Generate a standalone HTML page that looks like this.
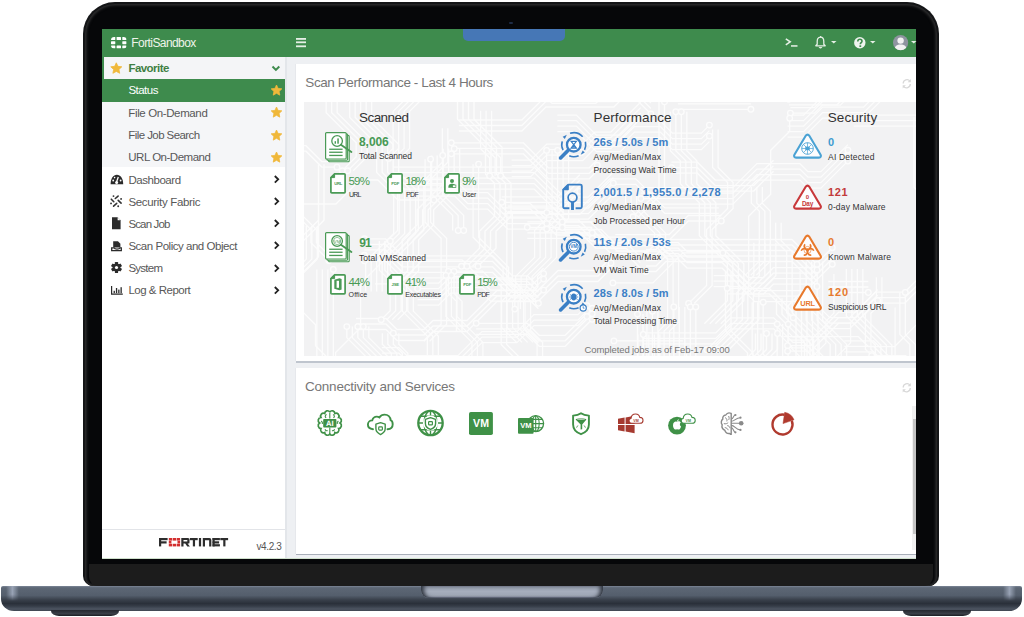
<!DOCTYPE html>
<html><head><meta charset="utf-8">
<style>
html,body{margin:0;padding:0;width:1024px;height:617px;overflow:hidden;background:#fff;font-family:"Liberation Sans",sans-serif;}
.a{position:absolute;}
.t{position:absolute;white-space:pre;font-family:"Liberation Sans",sans-serif;}
svg{position:absolute;overflow:visible;}
</style></head><body>
<!-- laptop lid -->
<div class="a" style="left:83px;top:1.5px;width:856.2px;height:584.5px;border-radius:32px 32px 10px 10px;background:#141517;"></div>
<div class="a" style="left:85px;top:3.5px;width:852.2px;height:582px;border-radius:30px 30px 8px 8px;background:#060709;box-shadow:inset 0 0 2.5px 1.6px #2e2e2f;"></div>
<div class="a" style="left:89px;top:564px;width:844px;height:21.5px;border-radius:0 0 9px 9px;background:#1c1c1c;"></div>
<!-- camera -->
<div class="a" style="left:509px;top:21.5px;width:4px;height:2px;border-radius:1px;background:#1e2c46;"></div>
<!-- base -->
<div class="a" style="left:1px;top:585.8px;width:1021px;height:25.2px;border-radius:2px 2px 13px 13px / 2px 2px 12px 12px;background:linear-gradient(#7d8798 0%,#5d6775 7%,#545e6c 38%,#39404b 55%,#2a303a 70%,#353c47 80%,#4c5461 92%,#3f4650 100%);"></div>
<div class="a" style="left:6px;top:586px;width:13px;height:15px;background:linear-gradient(90deg,rgba(150,160,178,0),rgba(156,166,184,.95) 50%,rgba(150,160,178,0));-webkit-mask-image:linear-gradient(#000 55%,transparent);"></div>
<div class="a" style="left:1003px;top:586px;width:13px;height:15px;background:linear-gradient(90deg,rgba(150,160,178,0),rgba(156,166,184,.95) 50%,rgba(150,160,178,0));-webkit-mask-image:linear-gradient(#000 55%,transparent);"></div>
<div class="a" style="left:421px;top:586px;width:182px;height:12px;border-radius:0 0 8px 8px;background:linear-gradient(#8e96a6,#a6aebd 45%,#9aa2b1);box-shadow:inset 5px 0 4px -2px #2f353f, inset -5px 0 4px -2px #2f353f, inset 0 -1px 1px #6a7282;"></div>
<div class="a" style="left:51px;top:610px;width:68px;height:6px;border-radius:0 0 8px 8px / 0 0 5px 5px;background:linear-gradient(#23272e,#3a3f47 60%,#1a1d22);"></div>
<div class="a" style="left:903px;top:610px;width:68px;height:6px;border-radius:0 0 8px 8px / 0 0 5px 5px;background:linear-gradient(#23272e,#3a3f47 60%,#1a1d22);"></div>

<!-- screen -->
<div class="a" id="screen" style="left:102px;top:29px;width:814px;height:530px;background:#eef0f3;overflow:hidden;">
  <!-- header -->
  <div class="a" style="left:0;top:0;width:814px;height:28px;background:#3e8b4d;"></div>
  <div class="a" style="left:361px;top:0;width:102px;height:12px;background:#4677b6;border-radius:0 0 5px 5px;"></div>
  <!-- sidebar -->
  <div class="a" style="left:0;top:28px;width:183px;height:502px;background:#fff;"></div>
  <div class="a" style="left:183px;top:28px;width:2px;height:502px;background:#e3e6ea;"></div>
  <div class="a" style="left:0;top:28px;width:183px;height:22px;background:#f4f5f7;"></div>
  <div class="a" style="left:0;top:28px;width:2px;height:22px;background:#3e8b4d;"></div>
  <div class="a" style="left:0;top:50px;width:183px;height:22.5px;background:#3e8b4d;"></div>
  <div class="a" style="left:0;top:72.5px;width:183px;height:65.3px;background:#f5f6f8;"></div>
  <div class="a" style="left:0;top:500px;width:183px;height:1px;background:#e2e4e8;"></div>
  <!-- panel 1 -->
  <div class="a" style="left:194px;top:35px;width:620px;height:297px;background:#fff;box-shadow:-1px 0 0 #e6e8ec;"></div>
  <div class="a" style="left:194px;top:332px;width:620px;height:2px;background:#bfc5ce;"></div>
  
  <!-- panel 2 -->
  <div class="a" style="left:194px;top:339px;width:620px;height:186px;background:#fff;box-shadow:-1px 0 0 #e6e8ec;"></div>
  <div class="a" style="left:194px;top:525px;width:620px;height:1px;background:#a9afb9;"></div>
  <div class="a" style="left:0;top:529px;width:814px;height:1px;background:#cfe0cc;"></div>
  <div class="a" style="left:810px;top:377px;width:4px;height:144px;background:#f0f0f0;"></div>
  <div class="a" style="left:810.5px;top:390px;width:3px;height:115px;background:#c4c4c4;"></div>
</div>
<svg style="left:304px;top:102px;overflow:hidden" width="612" height="254" viewBox="0 0 612 254"><rect x="0" y="0" width="612" height="254" fill="#f2f2f3"/><g fill="none" stroke="#fcfcfc" stroke-width="1.3" stroke-linejoin="round"><path d="M333.8 232.5 L333.8 274.5 L333.8 296.5 L309.8 320.5 L309.8 341.5 L292.8 358.5 L292.8 402.5 L292.8 414.5 L312.8 434.5"/><path d="M339.3 232.5 L339.3 274.5 L339.3 296.5 L315.3 320.5 L315.3 341.5 L298.3 358.5 L298.3 402.5 L298.3 414.5 L318.3 434.5"/><path d="M344.8 232.5 L344.8 274.5 L344.8 296.5 L320.8 320.5 L320.8 341.5 L303.8 358.5 L303.8 402.5 L303.8 414.5 L323.8 434.5"/><path d="M350.3 232.5 L350.3 274.5 L350.3 296.5 L326.3 320.5 L326.3 341.5 L309.3 358.5 L309.3 402.5 L309.3 414.5 L329.3 434.5"/><path d="M355.8 232.5 L355.8 274.5 L355.8 296.5 L331.8 320.5 L331.8 341.5 L314.8 358.5 L314.8 402.5 L314.8 414.5 L334.8 434.5"/><path d="M127.7 53.5 L127.7 92.5 L148.7 113.5 L148.7 128.5"/><path d="M133.2 53.5 L133.2 92.5 L154.2 113.5 L154.2 128.5"/><path d="M138.7 53.5 L138.7 92.5 L159.7 113.5 L159.7 128.5"/><path d="M22.2 -25.2 L22.2 -2.2 L22.2 10.8 L52.2 40.8 L52.2 54.8 L38.2 68.8"/><path d="M27.7 -25.2 L27.7 -2.2 L27.7 10.8 L57.7 40.8 L57.7 54.8 L43.7 68.8"/><path d="M33.2 -25.2 L33.2 -2.2 L33.2 10.8 L63.2 40.8 L63.2 54.8 L49.2 68.8"/><path d="M-13.1 102.0 L31.9 102.0 L55.9 78.0 L73.9 78.0 L93.9 98.0 L129.9 98.0"/><path d="M172.2 221.3 L207.2 221.3 L223.2 221.3 L235.2 233.3 L261.2 233.3 L288.2 206.3"/><path d="M172.2 226.8 L207.2 226.8 L223.2 226.8 L235.2 238.8 L261.2 238.8 L288.2 211.8"/><path d="M172.2 232.3 L207.2 232.3 L223.2 232.3 L235.2 244.3 L261.2 244.3 L288.2 217.3"/><path d="M60.4 136.8 L81.4 136.8 L98.4 153.8 L123.4 153.8 L143.4 153.8 L188.4 153.8 L208.4 173.8 L223.4 173.8 L234.4 184.8"/><path d="M60.4 142.3 L81.4 142.3 L98.4 159.3 L123.4 159.3 L143.4 159.3 L188.4 159.3 L208.4 179.3 L223.4 179.3 L234.4 190.3"/><path d="M60.4 147.8 L81.4 147.8 L98.4 164.8 L123.4 164.8 L143.4 164.8 L188.4 164.8 L208.4 184.8 L223.4 184.8 L234.4 195.8"/><path d="M60.4 153.3 L81.4 153.3 L98.4 170.3 L123.4 170.3 L143.4 170.3 L188.4 170.3 L208.4 190.3 L223.4 190.3 L234.4 201.3"/><path d="M60.4 158.8 L81.4 158.8 L98.4 175.8 L123.4 175.8 L143.4 175.8 L188.4 175.8 L208.4 195.8 L223.4 195.8 L234.4 206.8"/><path d="M333.5 212.1 L333.5 235.1 L333.5 258.1 L333.5 272.1 L355.5 294.1 L355.5 306.1 L336.5 325.1"/><path d="M339.0 212.1 L339.0 235.1 L339.0 258.1 L339.0 272.1 L361.0 294.1 L361.0 306.1 L342.0 325.1"/><path d="M309.9 238.9 L349.9 238.9 L378.9 238.9"/><path d="M176.6 8.8 L176.6 46.8 L185.6 55.8 L185.6 73.8"/><path d="M182.1 8.8 L182.1 46.8 L191.1 55.8 L191.1 73.8"/><path d="M187.6 8.8 L187.6 46.8 L196.6 55.8 L196.6 73.8"/><path d="M342.0 147.5 L352.0 147.5 L362.0 137.5 L379.0 137.5 L415.0 137.5 L449.0 137.5 L488.0 137.5 L513.0 162.5"/><path d="M342.0 153.0 L352.0 153.0 L362.0 143.0 L379.0 143.0 L415.0 143.0 L449.0 143.0 L488.0 143.0 L513.0 168.0"/><path d="M342.0 158.5 L352.0 158.5 L362.0 148.5 L379.0 148.5 L415.0 148.5 L449.0 148.5 L488.0 148.5 L513.0 173.5"/><path d="M342.0 164.0 L352.0 164.0 L362.0 154.0 L379.0 154.0 L415.0 154.0 L449.0 154.0 L488.0 154.0 L513.0 179.0"/><path d="M342.0 169.5 L352.0 169.5 L362.0 159.5 L379.0 159.5 L415.0 159.5 L449.0 159.5 L488.0 159.5 L513.0 184.5"/><path d="M408.6 27.5 L408.6 65.5 L423.6 80.5 L423.6 106.5 L402.6 127.5 L402.6 149.5 L402.6 183.5 L384.6 201.5"/><path d="M414.1 27.5 L414.1 65.5 L429.1 80.5 L429.1 106.5 L408.1 127.5 L408.1 149.5 L408.1 183.5 L390.1 201.5"/><path d="M154.9 18.0 L181.9 18.0 L217.9 18.0 L241.9 -6.0 L271.9 -6.0 L309.9 -6.0 L318.9 -15.0 L330.9 -15.0 L346.9 1.0"/><path d="M154.9 23.5 L181.9 23.5 L217.9 23.5 L241.9 -0.5 L271.9 -0.5 L309.9 -0.5 L318.9 -9.5 L330.9 -9.5 L346.9 6.5"/><path d="M154.9 29.0 L181.9 29.0 L217.9 29.0 L241.9 5.0 L271.9 5.0 L309.9 5.0 L318.9 -4.0 L330.9 -4.0 L346.9 12.0"/><path d="M472.5 196.3 L472.5 212.3 L500.5 240.3 L500.5 273.3 L500.5 295.3 L523.5 318.3 L523.5 328.3 L523.5 372.3"/><path d="M478.0 196.3 L478.0 212.3 L506.0 240.3 L506.0 273.3 L506.0 295.3 L529.0 318.3 L529.0 328.3 L529.0 372.3"/><path d="M610.0 15.2 L610.0 51.2 L610.0 85.2 L632.0 107.2"/><path d="M483.6 238.2 L506.6 238.2 L534.6 210.2 L551.6 210.2 L571.6 190.2 L600.6 190.2 L618.6 172.2 L629.6 172.2 L639.6 182.2"/><path d="M483.6 243.7 L506.6 243.7 L534.6 215.7 L551.6 215.7 L571.6 195.7 L600.6 195.7 L618.6 177.7 L629.6 177.7 L639.6 187.7"/><path d="M483.6 249.2 L506.6 249.2 L534.6 221.2 L551.6 221.2 L571.6 201.2 L600.6 201.2 L618.6 183.2 L629.6 183.2 L639.6 193.2"/><path d="M89.3 65.1 L108.3 65.1 L151.3 65.1 L189.3 65.1 L230.3 65.1 L260.3 95.1 L284.3 95.1 L309.3 70.1"/><path d="M89.3 70.6 L108.3 70.6 L151.3 70.6 L189.3 70.6 L230.3 70.6 L260.3 100.6 L284.3 100.6 L309.3 75.6"/><path d="M89.3 76.1 L108.3 76.1 L151.3 76.1 L189.3 76.1 L230.3 76.1 L260.3 106.1 L284.3 106.1 L309.3 81.1"/><path d="M89.3 81.6 L108.3 81.6 L151.3 81.6 L189.3 81.6 L230.3 81.6 L260.3 111.6 L284.3 111.6 L309.3 86.6"/><path d="M89.3 87.1 L108.3 87.1 L151.3 87.1 L189.3 87.1 L230.3 87.1 L260.3 117.1 L284.3 117.1 L309.3 92.1"/><path d="M311.3 132.7 L355.3 132.7 L363.3 140.7 L374.3 140.7 L383.3 149.7 L418.3 149.7 L444.3 175.7 L459.3 175.7 L469.3 165.7 L508.3 165.7 L528.3 145.7"/><path d="M311.3 138.2 L355.3 138.2 L363.3 146.2 L374.3 146.2 L383.3 155.2 L418.3 155.2 L444.3 181.2 L459.3 181.2 L469.3 171.2 L508.3 171.2 L528.3 151.2"/><path d="M311.3 143.7 L355.3 143.7 L363.3 151.7 L374.3 151.7 L383.3 160.7 L418.3 160.7 L444.3 186.7 L459.3 186.7 L469.3 176.7 L508.3 176.7 L528.3 156.7"/><path d="M311.3 149.2 L355.3 149.2 L363.3 157.2 L374.3 157.2 L383.3 166.2 L418.3 166.2 L444.3 192.2 L459.3 192.2 L469.3 182.2 L508.3 182.2 L528.3 162.2"/><path d="M144.5 169.4 L144.5 191.4 L152.5 199.4 L152.5 229.4"/><path d="M150.0 169.4 L150.0 191.4 L158.0 199.4 L158.0 229.4"/><path d="M138.3 26.2 L138.3 60.2 L114.3 84.2 L114.3 128.2 L86.3 156.2"/><path d="M143.8 26.2 L143.8 60.2 L119.8 84.2 L119.8 128.2 L91.8 156.2"/><path d="M448.2 200.2 L448.2 230.2 L448.2 252.2 L462.2 266.2 L462.2 284.2 L462.2 302.2"/><path d="M453.7 200.2 L453.7 230.2 L453.7 252.2 L467.7 266.2 L467.7 284.2 L467.7 302.2"/><path d="M459.2 200.2 L459.2 230.2 L459.2 252.2 L473.2 266.2 L473.2 284.2 L473.2 302.2"/><path d="M484.9 -2.7 L501.9 -2.7 L532.9 -2.7 L561.9 -31.7 L575.9 -31.7 L583.9 -39.7 L628.9 -39.7 L654.9 -13.7"/><path d="M484.9 2.8 L501.9 2.8 L532.9 2.8 L561.9 -26.2 L575.9 -26.2 L583.9 -34.2 L628.9 -34.2 L654.9 -8.2"/><path d="M40.2 -12.4 L56.2 -12.4 L78.2 -34.4 L110.2 -34.4 L137.2 -61.4"/><path d="M447.3 85.1 L447.3 101.1 L455.3 109.1 L455.3 124.1 L455.3 159.1 L441.3 173.1"/><path d="M452.8 85.1 L452.8 101.1 L460.8 109.1 L460.8 124.1 L460.8 159.1 L446.8 173.1"/><path d="M458.3 85.1 L458.3 101.1 L466.3 109.1 L466.3 124.1 L466.3 159.1 L452.3 173.1"/><path d="M546.6 219.9 L546.6 240.9 L533.6 253.9 L533.6 284.9 L544.6 295.9 L544.6 327.9 L544.6 340.9 L515.6 369.9 L515.6 392.9 L541.6 418.9"/><path d="M423.2 186.3 L439.2 186.3 L465.2 186.3 L489.2 210.3"/><path d="M423.2 191.8 L439.2 191.8 L465.2 191.8 L489.2 215.8"/><path d="M321.6 88.1 L321.6 102.1 L350.6 131.1 L350.6 143.1 L363.6 156.1 L363.6 176.1 L363.6 220.1 L354.6 229.1 L354.6 270.1 L330.6 294.1"/><path d="M327.1 88.1 L327.1 102.1 L356.1 131.1 L356.1 143.1 L369.1 156.1 L369.1 176.1 L369.1 220.1 L360.1 229.1 L360.1 270.1 L336.1 294.1"/><path d="M332.6 88.1 L332.6 102.1 L361.6 131.1 L361.6 143.1 L374.6 156.1 L374.6 176.1 L374.6 220.1 L365.6 229.1 L365.6 270.1 L341.6 294.1"/><path d="M-11.1 39.6 L-11.1 75.6 L-11.1 109.6 L6.9 127.6 L6.9 140.6 L24.9 158.6"/><path d="M-5.6 39.6 L-5.6 75.6 L-5.6 109.6 L12.4 127.6 L12.4 140.6 L30.4 158.6"/><path d="M572.4 175.3 L572.4 200.3 L561.4 211.3 L561.4 247.3 L575.4 261.3 L575.4 293.3 L586.4 304.3"/><path d="M577.9 175.3 L577.9 200.3 L566.9 211.3 L566.9 247.3 L580.9 261.3 L580.9 293.3 L591.9 304.3"/><path d="M471.7 120.7 L471.7 138.7 L482.7 149.7 L482.7 178.7 L482.7 210.7 L509.7 237.7 L509.7 259.7 L524.7 274.7"/><path d="M477.2 120.7 L477.2 138.7 L488.2 149.7 L488.2 178.7 L488.2 210.7 L515.2 237.7 L515.2 259.7 L530.2 274.7"/><path d="M-14.0 43.7 L2.0 43.7 L18.0 59.7 L33.0 59.7"/><path d="M-14.0 49.2 L2.0 49.2 L18.0 65.2 L33.0 65.2"/><path d="M197.2 181.5 L197.2 219.5 L197.2 242.5 L213.2 258.5"/><path d="M202.7 181.5 L202.7 219.5 L202.7 242.5 L218.7 258.5"/><path d="M451.5 231.5 L451.5 247.5 L433.5 265.5 L433.5 280.5 L459.5 306.5 L459.5 345.5 L467.5 353.5 L467.5 376.5"/><path d="M457.0 231.5 L457.0 247.5 L439.0 265.5 L439.0 280.5 L465.0 306.5 L465.0 345.5 L473.0 353.5 L473.0 376.5"/><path d="M462.5 231.5 L462.5 247.5 L444.5 265.5 L444.5 280.5 L470.5 306.5 L470.5 345.5 L478.5 353.5 L478.5 376.5"/><path d="M468.0 231.5 L468.0 247.5 L450.0 265.5 L450.0 280.5 L476.0 306.5 L476.0 345.5 L484.0 353.5 L484.0 376.5"/><path d="M473.5 231.5 L473.5 247.5 L455.5 265.5 L455.5 280.5 L481.5 306.5 L481.5 345.5 L489.5 353.5 L489.5 376.5"/><path d="M339.8 230.9 L382.8 230.9 L411.8 230.9 L426.8 215.9 L469.8 215.9 L488.8 234.9 L499.8 234.9 L519.8 254.9 L541.8 254.9"/><path d="M339.8 236.4 L382.8 236.4 L411.8 236.4 L426.8 221.4 L469.8 221.4 L488.8 240.4 L499.8 240.4 L519.8 260.4 L541.8 260.4"/><path d="M339.8 241.9 L382.8 241.9 L411.8 241.9 L426.8 226.9 L469.8 226.9 L488.8 245.9 L499.8 245.9 L519.8 265.9 L541.8 265.9"/><path d="M157.9 -23.7 L185.9 -23.7 L222.9 -23.7 L247.9 1.3 L291.9 1.3 L301.9 -8.7"/><path d="M70.9 181.8 L94.9 181.8 L118.9 157.8 L157.9 157.8 L175.9 175.8 L206.9 175.8 L229.9 198.8"/><path d="M502.2 159.4 L502.2 174.4 L502.2 218.4 L526.2 242.4 L526.2 252.4 L526.2 288.4 L526.2 307.4 L513.2 320.4"/><path d="M507.7 159.4 L507.7 174.4 L507.7 218.4 L531.7 242.4 L531.7 252.4 L531.7 288.4 L531.7 307.4 L518.7 320.4"/><path d="M513.2 159.4 L513.2 174.4 L513.2 218.4 L537.2 242.4 L537.2 252.4 L537.2 288.4 L537.2 307.4 L524.2 320.4"/><path d="M518.7 159.4 L518.7 174.4 L518.7 218.4 L542.7 242.4 L542.7 252.4 L542.7 288.4 L542.7 307.4 L529.7 320.4"/><path d="M78.3 231.2 L78.3 242.2 L87.3 251.2 L87.3 273.2 L73.3 287.2 L73.3 327.2 L58.3 342.2 L58.3 369.2 L41.3 386.2 L41.3 431.2 L25.3 447.2"/><path d="M83.8 231.2 L83.8 242.2 L92.8 251.2 L92.8 273.2 L78.8 287.2 L78.8 327.2 L63.8 342.2 L63.8 369.2 L46.8 386.2 L46.8 431.2 L30.8 447.2"/><path d="M89.3 231.2 L89.3 242.2 L98.3 251.2 L98.3 273.2 L84.3 287.2 L84.3 327.2 L69.3 342.2 L69.3 369.2 L52.3 386.2 L52.3 431.2 L36.3 447.2"/><path d="M94.8 231.2 L94.8 242.2 L103.8 251.2 L103.8 273.2 L89.8 287.2 L89.8 327.2 L74.8 342.2 L74.8 369.2 L57.8 386.2 L57.8 431.2 L41.8 447.2"/><path d="M223.3 119.8 L248.3 119.8 L288.3 119.8"/><path d="M223.3 125.3 L248.3 125.3 L288.3 125.3"/><path d="M223.3 130.8 L248.3 130.8 L288.3 130.8"/><path d="M223.3 136.3 L248.3 136.3 L288.3 136.3"/><path d="M382.6 252.0 L382.6 271.0 L369.6 284.0 L369.6 303.0"/><path d="M542.3 167.0 L542.3 178.0 L542.3 214.0 L571.3 243.0 L571.3 281.0 L546.3 306.0 L546.3 347.0 L529.3 364.0"/><path d="M547.8 167.0 L547.8 178.0 L547.8 214.0 L576.8 243.0 L576.8 281.0 L551.8 306.0 L551.8 347.0 L534.8 364.0"/><path d="M553.3 167.0 L553.3 178.0 L553.3 214.0 L582.3 243.0 L582.3 281.0 L557.3 306.0 L557.3 347.0 L540.3 364.0"/><path d="M558.8 167.0 L558.8 178.0 L558.8 214.0 L587.8 243.0 L587.8 281.0 L562.8 306.0 L562.8 347.0 L545.8 364.0"/><path d="M591.1 205.6 L591.1 239.6 L591.1 279.6 L565.1 305.6"/><path d="M549.8 13.2 L580.8 13.2 L625.8 13.2 L641.8 -2.8 L675.8 -2.8 L706.8 -2.8 L722.8 13.2"/><path d="M549.8 18.7 L580.8 18.7 L625.8 18.7 L641.8 2.7 L675.8 2.7 L706.8 2.7 L722.8 18.7"/><path d="M549.8 24.2 L580.8 24.2 L625.8 24.2 L641.8 8.2 L675.8 8.2 L706.8 8.2 L722.8 24.2"/><path d="M102.1 -19.6 L102.1 -3.6 L89.1 9.4 L89.1 46.4 L79.1 56.4"/><path d="M107.6 -19.6 L107.6 -3.6 L94.6 9.4 L94.6 46.4 L84.6 56.4"/><path d="M113.1 -19.6 L113.1 -3.6 L100.1 9.4 L100.1 46.4 L90.1 56.4"/><path d="M118.6 -19.6 L118.6 -3.6 L105.6 9.4 L105.6 46.4 L95.6 56.4"/><path d="M367.5 60.2 L393.5 60.2 L411.5 78.2 L449.5 78.2 L469.5 58.2"/><path d="M367.5 65.7 L393.5 65.7 L411.5 83.7 L449.5 83.7 L469.5 63.7"/><path d="M367.5 71.2 L393.5 71.2 L411.5 89.2 L449.5 89.2 L469.5 69.2"/><path d="M202.8 112.1 L202.8 155.1 L202.8 177.1 L210.8 185.1 L210.8 207.1"/><path d="M208.3 112.1 L208.3 155.1 L208.3 177.1 L216.3 185.1 L216.3 207.1"/><path d="M208.3 101.5 L226.3 101.5 L252.3 127.5 L297.3 127.5 L313.3 143.5 L344.3 143.5 L355.3 132.5 L365.3 132.5 L384.3 113.5 L417.3 113.5"/><path d="M208.3 107.0 L226.3 107.0 L252.3 133.0 L297.3 133.0 L313.3 149.0 L344.3 149.0 L355.3 138.0 L365.3 138.0 L384.3 119.0 L417.3 119.0"/><path d="M567.7 253.7 L601.7 253.7 L629.7 281.7 L640.7 281.7 L661.7 302.7 L680.7 302.7 L691.7 313.7 L712.7 313.7 L724.7 325.7"/><path d="M567.7 259.2 L601.7 259.2 L629.7 287.2 L640.7 287.2 L661.7 308.2 L680.7 308.2 L691.7 319.2 L712.7 319.2 L724.7 331.2"/><path d="M567.7 264.7 L601.7 264.7 L629.7 292.7 L640.7 292.7 L661.7 313.7 L680.7 313.7 L691.7 324.7 L712.7 324.7 L724.7 336.7"/><path d="M567.7 270.2 L601.7 270.2 L629.7 298.2 L640.7 298.2 L661.7 319.2 L680.7 319.2 L691.7 330.2 L712.7 330.2 L724.7 342.2"/><path d="M567.7 275.7 L601.7 275.7 L629.7 303.7 L640.7 303.7 L661.7 324.7 L680.7 324.7 L691.7 335.7 L712.7 335.7 L724.7 347.7"/><path d="M336.9 85.6 L375.9 85.6 L411.9 85.6 L428.9 85.6 L452.9 61.6 L495.9 61.6 L503.9 69.6 L516.9 69.6 L543.9 42.6"/><path d="M336.9 91.1 L375.9 91.1 L411.9 91.1 L428.9 91.1 L452.9 67.1 L495.9 67.1 L503.9 75.1 L516.9 75.1 L543.9 48.1"/><path d="M336.9 96.6 L375.9 96.6 L411.9 96.6 L428.9 96.6 L452.9 72.6 L495.9 72.6 L503.9 80.6 L516.9 80.6 L543.9 53.6"/><path d="M336.9 102.1 L375.9 102.1 L411.9 102.1 L428.9 102.1 L452.9 78.1 L495.9 78.1 L503.9 86.1 L516.9 86.1 L543.9 59.1"/><path d="M12.8 167.4 L12.8 202.4 L12.8 216.4 L12.8 249.4 L12.8 285.4 L25.8 298.4"/><path d="M18.3 167.4 L18.3 202.4 L18.3 216.4 L18.3 249.4 L18.3 285.4 L31.3 298.4"/><path d="M23.8 167.4 L23.8 202.4 L23.8 216.4 L23.8 249.4 L23.8 285.4 L36.8 298.4"/><path d="M29.3 167.4 L29.3 202.4 L29.3 216.4 L29.3 249.4 L29.3 285.4 L42.3 298.4"/><path d="M169.1 62.2 L169.1 100.2 L169.1 135.2 L199.1 165.2 L199.1 177.2 L221.1 199.2 L221.1 228.2 L233.1 240.2 L233.1 280.2"/><path d="M174.6 62.2 L174.6 100.2 L174.6 135.2 L204.6 165.2 L204.6 177.2 L226.6 199.2 L226.6 228.2 L238.6 240.2 L238.6 280.2"/><path d="M203.8 104.2 L247.8 104.2 L261.8 118.2 L274.8 118.2 L291.8 135.2 L321.8 135.2"/><path d="M203.8 109.7 L247.8 109.7 L261.8 123.7 L274.8 123.7 L291.8 140.7 L321.8 140.7"/><path d="M203.8 115.2 L247.8 115.2 L261.8 129.2 L274.8 129.2 L291.8 146.2 L321.8 146.2"/><path d="M121.1 57.2 L121.1 78.2 L121.1 120.2 L137.1 136.2 L137.1 179.2 L137.1 222.2 L120.1 239.2"/><path d="M126.6 57.2 L126.6 78.2 L126.6 120.2 L142.6 136.2 L142.6 179.2 L142.6 222.2 L125.6 239.2"/><path d="M258.3 120.0 L286.3 120.0 L307.3 141.0 L322.3 141.0 L336.3 155.0"/><path d="M258.3 125.5 L286.3 125.5 L307.3 146.5 L322.3 146.5 L336.3 160.5"/><path d="M258.3 131.0 L286.3 131.0 L307.3 152.0 L322.3 152.0 L336.3 166.0"/><path d="M349.7 -29.2 L370.7 -29.2 L398.7 -57.2 L428.7 -57.2 L437.7 -66.2"/><path d="M349.7 -23.7 L370.7 -23.7 L398.7 -51.7 L428.7 -51.7 L437.7 -60.7"/><path d="M349.7 -18.2 L370.7 -18.2 L398.7 -46.2 L428.7 -46.2 L437.7 -55.2"/><path d="M349.7 -12.7 L370.7 -12.7 L398.7 -40.7 L428.7 -40.7 L437.7 -49.7"/><path d="M349.7 -7.2 L370.7 -7.2 L398.7 -35.2 L428.7 -35.2 L437.7 -44.2"/><path d="M141.9 173.4 L141.9 214.4 L167.9 240.4 L167.9 266.4 L194.9 293.4 L194.9 306.4 L207.9 319.4 L207.9 330.4 L186.9 351.4"/><path d="M147.4 173.4 L147.4 214.4 L173.4 240.4 L173.4 266.4 L200.4 293.4 L200.4 306.4 L213.4 319.4 L213.4 330.4 L192.4 351.4"/><path d="M152.9 173.4 L152.9 214.4 L178.9 240.4 L178.9 266.4 L205.9 293.4 L205.9 306.4 L218.9 319.4 L218.9 330.4 L197.9 351.4"/><path d="M373.9 -14.7 L403.9 -14.7 L446.9 -14.7"/><path d="M373.9 -9.2 L403.9 -9.2 L446.9 -9.2"/><path d="M373.9 -3.7 L403.9 -3.7 L446.9 -3.7"/><path d="M373.9 1.8 L403.9 1.8 L446.9 1.8"/><path d="M373.9 7.3 L403.9 7.3 L446.9 7.3"/><path d="M421.5 169.9 L421.5 210.9 L421.5 228.9 L443.5 250.9 L443.5 262.9 L464.5 283.9"/><path d="M427.0 169.9 L427.0 210.9 L427.0 228.9 L449.0 250.9 L449.0 262.9 L470.0 283.9"/><path d="M409.7 173.6 L435.7 173.6 L450.7 188.6 L465.7 188.6 L498.7 188.6 L525.7 215.6 L545.7 215.6 L573.7 187.6"/><path d="M409.7 179.1 L435.7 179.1 L450.7 194.1 L465.7 194.1 L498.7 194.1 L525.7 221.1 L545.7 221.1 L573.7 193.1"/><path d="M409.7 184.6 L435.7 184.6 L450.7 199.6 L465.7 199.6 L498.7 199.6 L525.7 226.6 L545.7 226.6 L573.7 198.6"/><path d="M114.8 77.6 L150.8 77.6 L163.8 90.6 L183.8 90.6 L203.8 110.6 L242.8 110.6"/><path d="M114.8 83.1 L150.8 83.1 L163.8 96.1 L183.8 96.1 L203.8 116.1 L242.8 116.1"/><path d="M114.8 88.6 L150.8 88.6 L163.8 101.6 L183.8 101.6 L203.8 121.6 L242.8 121.6"/><path d="M114.8 94.1 L150.8 94.1 L163.8 107.1 L183.8 107.1 L203.8 127.1 L242.8 127.1"/><path d="M153.5 -24.7 L153.5 17.3 L181.5 45.3 L181.5 72.3 L190.5 81.3 L190.5 114.3 L175.5 129.3 L175.5 146.3 L157.5 164.3"/><path d="M159.0 -24.7 L159.0 17.3 L187.0 45.3 L187.0 72.3 L196.0 81.3 L196.0 114.3 L181.0 129.3 L181.0 146.3 L163.0 164.3"/><path d="M164.5 -24.7 L164.5 17.3 L192.5 45.3 L192.5 72.3 L201.5 81.3 L201.5 114.3 L186.5 129.3 L186.5 146.3 L168.5 164.3"/><path d="M170.0 -24.7 L170.0 17.3 L198.0 45.3 L198.0 72.3 L207.0 81.3 L207.0 114.3 L192.0 129.3 L192.0 146.3 L174.0 164.3"/><path d="M75.3 139.1 L75.3 168.1 L98.3 191.1 L98.3 209.1 L123.3 234.1 L123.3 272.1 L111.3 284.1"/><path d="M80.8 139.1 L80.8 168.1 L103.8 191.1 L103.8 209.1 L128.8 234.1 L128.8 272.1 L116.8 284.1"/><path d="M86.3 139.1 L86.3 168.1 L109.3 191.1 L109.3 209.1 L134.3 234.1 L134.3 272.1 L122.3 284.1"/><path d="M366.3 9.8 L366.3 19.8 L366.3 48.8 L376.3 58.8 L376.3 81.8 L395.3 100.8 L395.3 133.8 L423.3 161.8 L423.3 198.8 L400.3 221.8"/><path d="M371.8 9.8 L371.8 19.8 L371.8 48.8 L381.8 58.8 L381.8 81.8 L400.8 100.8 L400.8 133.8 L428.8 161.8 L428.8 198.8 L405.8 221.8"/><path d="M377.3 9.8 L377.3 19.8 L377.3 48.8 L387.3 58.8 L387.3 81.8 L406.3 100.8 L406.3 133.8 L434.3 161.8 L434.3 198.8 L411.3 221.8"/><path d="M382.8 9.8 L382.8 19.8 L382.8 48.8 L392.8 58.8 L392.8 81.8 L411.8 100.8 L411.8 133.8 L439.8 161.8 L439.8 198.8 L416.8 221.8"/><path d="M308.9 180.9 L348.9 180.9 L378.9 150.9 L407.9 150.9 L418.9 150.9"/><path d="M14.5 110.7 L14.5 140.7 L14.5 154.7 L-4.5 173.7 L-4.5 206.7 L11.5 222.7 L11.5 243.7 L31.5 263.7 L31.5 296.7 L61.5 326.7"/><path d="M242.6 48.4 L242.6 82.4 L242.6 116.4 L230.6 128.4 L230.6 155.4 L211.6 174.4 L211.6 185.4 L197.6 199.4 L197.6 225.4 L212.6 240.4"/><path d="M248.1 48.4 L248.1 82.4 L248.1 116.4 L236.1 128.4 L236.1 155.4 L217.1 174.4 L217.1 185.4 L203.1 199.4 L203.1 225.4 L218.1 240.4"/><path d="M253.6 48.4 L253.6 82.4 L253.6 116.4 L241.6 128.4 L241.6 155.4 L222.6 174.4 L222.6 185.4 L208.6 199.4 L208.6 225.4 L223.6 240.4"/><path d="M259.1 48.4 L259.1 82.4 L259.1 116.4 L247.1 128.4 L247.1 155.4 L228.1 174.4 L228.1 185.4 L214.1 199.4 L214.1 225.4 L229.1 240.4"/><path d="M264.6 48.4 L264.6 82.4 L264.6 116.4 L252.6 128.4 L252.6 155.4 L233.6 174.4 L233.6 185.4 L219.6 199.4 L219.6 225.4 L234.6 240.4"/><path d="M45.7 -24.5 L45.7 -4.5 L45.7 15.5 L72.7 42.5 L72.7 70.5 L89.7 87.5 L89.7 131.5 L61.7 159.5 L61.7 189.5"/><path d="M51.2 -24.5 L51.2 -4.5 L51.2 15.5 L78.2 42.5 L78.2 70.5 L95.2 87.5 L95.2 131.5 L67.2 159.5 L67.2 189.5"/><path d="M56.7 -24.5 L56.7 -4.5 L56.7 15.5 L83.7 42.5 L83.7 70.5 L100.7 87.5 L100.7 131.5 L72.7 159.5 L72.7 189.5"/><path d="M62.2 -24.5 L62.2 -4.5 L62.2 15.5 L89.2 42.5 L89.2 70.5 L106.2 87.5 L106.2 131.5 L78.2 159.5 L78.2 189.5"/><path d="M67.7 -24.5 L67.7 -4.5 L67.7 15.5 L94.7 42.5 L94.7 70.5 L111.7 87.5 L111.7 131.5 L83.7 159.5 L83.7 189.5"/><path d="M240.8 106.9 L275.8 106.9 L305.8 76.9 L331.8 76.9 L360.8 105.9 L391.8 105.9 L414.8 105.9"/><path d="M240.8 112.4 L275.8 112.4 L305.8 82.4 L331.8 82.4 L360.8 111.4 L391.8 111.4 L414.8 111.4"/><path d="M486.4 5.6 L510.4 5.6 L518.4 -2.4 L536.4 -2.4 L552.4 -18.4 L587.4 -18.4 L616.4 -47.4 L629.4 -47.4 L640.4 -58.4"/><path d="M486.4 11.1 L510.4 11.1 L518.4 3.1 L536.4 3.1 L552.4 -12.9 L587.4 -12.9 L616.4 -41.9 L629.4 -41.9 L640.4 -52.9"/><path d="M-3.2 124.1 L-3.2 157.1 L-25.2 179.1 L-25.2 207.1 L-52.2 234.1 L-52.2 253.1"/><path d="M2.3 124.1 L2.3 157.1 L-19.7 179.1 L-19.7 207.1 L-46.7 234.1 L-46.7 253.1"/><path d="M7.8 124.1 L7.8 157.1 L-14.2 179.1 L-14.2 207.1 L-41.2 234.1 L-41.2 253.1"/><path d="M13.3 124.1 L13.3 157.1 L-8.7 179.1 L-8.7 207.1 L-35.7 234.1 L-35.7 253.1"/><path d="M253.4 13.1 L272.4 13.1 L292.4 33.1 L316.4 33.1 L330.4 19.1 L356.4 19.1 L368.4 31.1 L397.4 31.1 L405.4 23.1"/><path d="M253.4 18.6 L272.4 18.6 L292.4 38.6 L316.4 38.6 L330.4 24.6 L356.4 24.6 L368.4 36.6 L397.4 36.6 L405.4 28.6"/><path d="M253.4 24.1 L272.4 24.1 L292.4 44.1 L316.4 44.1 L330.4 30.1 L356.4 30.1 L368.4 42.1 L397.4 42.1 L405.4 34.1"/><path d="M253.4 29.6 L272.4 29.6 L292.4 49.6 L316.4 49.6 L330.4 35.6 L356.4 35.6 L368.4 47.6 L397.4 47.6 L405.4 39.6"/><path d="M369.8 204.9 L369.8 226.9 L369.8 251.9 L369.8 289.9 L360.8 298.9 L360.8 309.9"/><path d="M375.3 204.9 L375.3 226.9 L375.3 251.9 L375.3 289.9 L366.3 298.9 L366.3 309.9"/><path d="M380.8 204.9 L380.8 226.9 L380.8 251.9 L380.8 289.9 L371.8 298.9 L371.8 309.9"/><path d="M386.3 204.9 L386.3 226.9 L386.3 251.9 L386.3 289.9 L377.3 298.9 L377.3 309.9"/><path d="M391.8 204.9 L391.8 226.9 L391.8 251.9 L391.8 289.9 L382.8 298.9 L382.8 309.9"/><path d="M492.0 195.0 L492.0 224.0 L492.0 240.0 L492.0 280.0 L462.0 310.0 L462.0 321.0 L450.0 333.0 L450.0 367.0"/><path d="M497.5 195.0 L497.5 224.0 L497.5 240.0 L497.5 280.0 L467.5 310.0 L467.5 321.0 L455.5 333.0 L455.5 367.0"/><path d="M503.0 195.0 L503.0 224.0 L503.0 240.0 L503.0 280.0 L473.0 310.0 L473.0 321.0 L461.0 333.0 L461.0 367.0"/><path d="M508.5 195.0 L508.5 224.0 L508.5 240.0 L508.5 280.0 L478.5 310.0 L478.5 321.0 L466.5 333.0 L466.5 367.0"/><path d="M514.0 195.0 L514.0 224.0 L514.0 240.0 L514.0 280.0 L484.0 310.0 L484.0 321.0 L472.0 333.0 L472.0 367.0"/><path d="M113.6 181.1 L134.6 181.1 L146.6 169.1 L178.6 169.1 L186.6 177.1 L228.6 177.1 L239.6 166.1"/><path d="M113.6 186.6 L134.6 186.6 L146.6 174.6 L178.6 174.6 L186.6 182.6 L228.6 182.6 L239.6 171.6"/><path d="M113.6 192.1 L134.6 192.1 L146.6 180.1 L178.6 180.1 L186.6 188.1 L228.6 188.1 L239.6 177.1"/><path d="M113.6 197.6 L134.6 197.6 L146.6 185.6 L178.6 185.6 L186.6 193.6 L228.6 193.6 L239.6 182.6"/><path d="M113.6 203.1 L134.6 203.1 L146.6 191.1 L178.6 191.1 L186.6 199.1 L228.6 199.1 L239.6 188.1"/><path d="M473.2 222.1 L473.2 256.1 L473.2 286.1"/><path d="M478.7 222.1 L478.7 256.1 L478.7 286.1"/><path d="M484.2 222.1 L484.2 256.1 L484.2 286.1"/><path d="M197.8 94.8 L214.8 94.8 L253.8 94.8 L275.8 72.8"/><path d="M197.8 100.3 L214.8 100.3 L253.8 100.3 L275.8 78.3"/><path d="M197.8 105.8 L214.8 105.8 L253.8 105.8 L275.8 83.8"/><path d="M197.8 111.3 L214.8 111.3 L253.8 111.3 L275.8 89.3"/><path d="M14.5 62.2 L14.5 88.2 L14.5 118.2 L-8.5 141.2 L-8.5 176.2 L-20.5 188.2 L-20.5 229.2 L-33.5 242.2"/><path d="M20.0 62.2 L20.0 88.2 L20.0 118.2 L-3.0 141.2 L-3.0 176.2 L-15.0 188.2 L-15.0 229.2 L-28.0 242.2"/><path d="M529.9 172.1 L529.9 211.1 L521.9 219.1 L521.9 241.1 L493.9 269.1 L493.9 285.1 L516.9 308.1 L516.9 322.1"/><path d="M483.6 13.1 L499.6 13.1 L518.6 -5.9 L542.6 -5.9 L559.6 -5.9 L586.6 -32.9"/><path d="M483.6 18.6 L499.6 18.6 L518.6 -0.4 L542.6 -0.4 L559.6 -0.4 L586.6 -27.4"/><path d="M483.6 24.1 L499.6 24.1 L518.6 5.1 L542.6 5.1 L559.6 5.1 L586.6 -21.9"/><path d="M483.6 29.6 L499.6 29.6 L518.6 10.6 L542.6 10.6 L559.6 10.6 L586.6 -16.4"/><path d="M483.6 35.1 L499.6 35.1 L518.6 16.1 L542.6 16.1 L559.6 16.1 L586.6 -10.9"/><path d="M496.1 168.8 L496.1 191.8 L484.1 203.8 L484.1 242.8 L500.1 258.8 L500.1 290.8 L481.1 309.8"/><path d="M207.7 58.1 L226.7 58.1 L242.7 42.1 L278.7 42.1 L290.7 30.1 L306.7 30.1 L336.7 0.1"/><path d="M207.7 63.6 L226.7 63.6 L242.7 47.6 L278.7 47.6 L290.7 35.6 L306.7 35.6 L336.7 5.6"/><path d="M207.7 69.1 L226.7 69.1 L242.7 53.1 L278.7 53.1 L290.7 41.1 L306.7 41.1 L336.7 11.1"/><path d="M207.7 74.6 L226.7 74.6 L242.7 58.6 L278.7 58.6 L290.7 46.6 L306.7 46.6 L336.7 16.6"/><path d="M449.8 140.8 L449.8 173.8 L432.8 190.8 L432.8 217.8 L402.8 247.8"/><path d="M455.3 140.8 L455.3 173.8 L438.3 190.8 L438.3 217.8 L408.3 247.8"/><path d="M460.8 140.8 L460.8 173.8 L443.8 190.8 L443.8 217.8 L413.8 247.8"/><path d="M466.3 140.8 L466.3 173.8 L449.3 190.8 L449.3 217.8 L419.3 247.8"/><path d="M471.8 140.8 L471.8 173.8 L454.8 190.8 L454.8 217.8 L424.8 247.8"/><path d="M42.8 224.6 L42.8 235.6 L68.8 261.6 L68.8 293.6 L68.8 304.6 L80.8 316.6 L80.8 349.6 L104.8 373.6"/><path d="M48.3 224.6 L48.3 235.6 L74.3 261.6 L74.3 293.6 L74.3 304.6 L86.3 316.6 L86.3 349.6 L110.3 373.6"/><path d="M53.8 224.6 L53.8 235.6 L79.8 261.6 L79.8 293.6 L79.8 304.6 L91.8 316.6 L91.8 349.6 L115.8 373.6"/><path d="M59.3 224.6 L59.3 235.6 L85.3 261.6 L85.3 293.6 L85.3 304.6 L97.3 316.6 L97.3 349.6 L121.3 373.6"/><path d="M64.8 224.6 L64.8 235.6 L90.8 261.6 L90.8 293.6 L90.8 304.6 L102.8 316.6 L102.8 349.6 L126.8 373.6"/><path d="M479.4 234.7 L512.4 234.7 L554.4 234.7 L564.4 244.7 L590.4 244.7 L613.4 221.7 L630.4 221.7 L642.4 209.7 L675.4 209.7"/><path d="M595.8 190.4 L595.8 232.4 L605.8 242.4 L605.8 260.4 L629.8 284.4 L629.8 312.4 L644.8 327.4 L644.8 363.4 L630.8 377.4"/><path d="M601.3 190.4 L601.3 232.4 L611.3 242.4 L611.3 260.4 L635.3 284.4 L635.3 312.4 L650.3 327.4 L650.3 363.4 L636.3 377.4"/><path d="M77.9 245.6 L94.9 245.6 L102.9 253.6 L119.9 253.6 L153.9 253.6 L177.9 229.6 L212.9 229.6 L229.9 212.6 L273.9 212.6 L282.9 203.6"/><path d="M77.9 251.1 L94.9 251.1 L102.9 259.1 L119.9 259.1 L153.9 259.1 L177.9 235.1 L212.9 235.1 L229.9 218.1 L273.9 218.1 L282.9 209.1"/><path d="M77.9 256.6 L94.9 256.6 L102.9 264.6 L119.9 264.6 L153.9 264.6 L177.9 240.6 L212.9 240.6 L229.9 223.6 L273.9 223.6 L282.9 214.6"/><path d="M540.4 238.8 L569.4 238.8 L596.4 265.8 L629.4 265.8 L652.4 242.8 L689.4 242.8 L700.4 253.8 L743.4 253.8 L767.4 229.8 L797.4 229.8 L812.4 244.8"/><path d="M540.4 244.3 L569.4 244.3 L596.4 271.3 L629.4 271.3 L652.4 248.3 L689.4 248.3 L700.4 259.3 L743.4 259.3 L767.4 235.3 L797.4 235.3 L812.4 250.3"/><path d="M540.4 249.8 L569.4 249.8 L596.4 276.8 L629.4 276.8 L652.4 253.8 L689.4 253.8 L700.4 264.8 L743.4 264.8 L767.4 240.8 L797.4 240.8 L812.4 255.8"/><path d="M355.0 -0.2 L355.0 32.8 L355.0 65.8 L355.0 88.8 L329.0 114.8"/><path d="M360.5 -0.2 L360.5 32.8 L360.5 65.8 L360.5 88.8 L334.5 114.8"/><path d="M139.2 46.7 L139.2 81.7 L113.2 107.7 L113.2 122.7 L98.2 137.7 L98.2 168.7 L86.2 180.7 L86.2 208.7 L77.2 217.7"/><path d="M144.7 46.7 L144.7 81.7 L118.7 107.7 L118.7 122.7 L103.7 137.7 L103.7 168.7 L91.7 180.7 L91.7 208.7 L82.7 217.7"/><path d="M150.2 46.7 L150.2 81.7 L124.2 107.7 L124.2 122.7 L109.2 137.7 L109.2 168.7 L97.2 180.7 L97.2 208.7 L88.2 217.7"/><path d="M155.7 46.7 L155.7 81.7 L129.7 107.7 L129.7 122.7 L114.7 137.7 L114.7 168.7 L102.7 180.7 L102.7 208.7 L93.7 217.7"/><path d="M-16.5 179.3 L-16.5 193.3 L-26.5 203.3 L-26.5 221.3 L-48.5 243.3 L-48.5 260.3 L-58.5 270.3 L-58.5 302.3 L-83.5 327.3"/><path d="M52.0 216.5 L82.0 216.5 L93.0 227.5 L120.0 227.5 L129.0 218.5 L163.0 218.5 L193.0 188.5 L234.0 188.5 L254.0 168.5 L294.0 168.5 L307.0 155.5"/><path d="M52.0 222.0 L82.0 222.0 L93.0 233.0 L120.0 233.0 L129.0 224.0 L163.0 224.0 L193.0 194.0 L234.0 194.0 L254.0 174.0 L294.0 174.0 L307.0 161.0"/><path d="M52.0 227.5 L82.0 227.5 L93.0 238.5 L120.0 238.5 L129.0 229.5 L163.0 229.5 L193.0 199.5 L234.0 199.5 L254.0 179.5 L294.0 179.5 L307.0 166.5"/><path d="M342.9 209.2 L342.9 249.2 L342.9 284.2 L312.9 314.2 L312.9 340.2 L291.9 361.2"/><path d="M348.4 209.2 L348.4 249.2 L348.4 284.2 L318.4 314.2 L318.4 340.2 L297.4 361.2"/><path d="M353.9 209.2 L353.9 249.2 L353.9 284.2 L323.9 314.2 L323.9 340.2 L302.9 361.2"/><path d="M93.6 87.5 L93.6 128.5 L80.6 141.5 L80.6 157.5 L56.6 181.5 L56.6 193.5 L56.6 225.5 L31.6 250.5 L31.6 291.5 L12.6 310.5"/><path d="M524.3 179.5 L544.3 179.5 L564.3 179.5"/><path d="M524.3 185.0 L544.3 185.0 L564.3 185.0"/><path d="M524.3 190.5 L544.3 190.5 L564.3 190.5"/><path d="M147.3 40.8 L191.3 40.8 L219.3 40.8 L244.3 65.8 L285.3 65.8 L293.3 57.8"/><path d="M147.3 46.3 L191.3 46.3 L219.3 46.3 L244.3 71.3 L285.3 71.3 L293.3 63.3"/><path d="M147.3 51.8 L191.3 51.8 L219.3 51.8 L244.3 76.8 L285.3 76.8 L293.3 68.8"/><path d="M485.7 16.2 L485.7 29.2 L466.7 48.2 L466.7 92.2 L444.7 114.2 L444.7 146.2 L444.7 188.2 L425.7 207.2"/></g><g fill="#f2f2f3" stroke="#fcfcfc" stroke-width="1.3"><circle cx="339.3" cy="232.5" r="2.8"/><circle cx="323.8" cy="434.5" r="2.8"/><circle cx="334.8" cy="434.5" r="2.8"/><circle cx="154.2" cy="128.5" r="2.8"/><circle cx="159.7" cy="128.5" r="2.8"/><circle cx="138.7" cy="53.5" r="2.8"/><circle cx="38.2" cy="68.8" r="2.8"/><circle cx="43.7" cy="68.8" r="2.8"/><circle cx="33.2" cy="-25.2" r="2.8"/><circle cx="129.9" cy="98.0" r="2.8"/><circle cx="288.2" cy="206.3" r="2.8"/><circle cx="172.2" cy="221.3" r="2.8"/><circle cx="288.2" cy="211.8" r="2.8"/><circle cx="288.2" cy="217.3" r="2.8"/><circle cx="60.4" cy="136.8" r="2.8"/><circle cx="234.4" cy="201.3" r="2.8"/><circle cx="60.4" cy="153.3" r="2.8"/><circle cx="60.4" cy="158.8" r="2.8"/><circle cx="336.5" cy="325.1" r="2.8"/><circle cx="333.5" cy="212.1" r="2.8"/><circle cx="342.0" cy="325.1" r="2.8"/><circle cx="309.9" cy="238.9" r="2.8"/><circle cx="185.6" cy="73.8" r="2.8"/><circle cx="196.6" cy="73.8" r="2.8"/><circle cx="513.0" cy="162.5" r="2.8"/><circle cx="513.0" cy="168.0" r="2.8"/><circle cx="342.0" cy="153.0" r="2.8"/><circle cx="513.0" cy="184.5" r="2.8"/><circle cx="342.0" cy="169.5" r="2.8"/><circle cx="384.6" cy="201.5" r="2.8"/><circle cx="346.9" cy="12.0" r="2.8"/><circle cx="523.5" cy="372.3" r="2.8"/><circle cx="632.0" cy="107.2" r="2.8"/><circle cx="639.6" cy="187.7" r="2.8"/><circle cx="483.6" cy="243.7" r="2.8"/><circle cx="483.6" cy="249.2" r="2.8"/><circle cx="309.3" cy="81.1" r="2.8"/><circle cx="309.3" cy="92.1" r="2.8"/><circle cx="528.3" cy="145.7" r="2.8"/><circle cx="528.3" cy="162.2" r="2.8"/><circle cx="144.5" cy="169.4" r="2.8"/><circle cx="150.0" cy="169.4" r="2.8"/><circle cx="462.2" cy="302.2" r="2.8"/><circle cx="459.2" cy="200.2" r="2.8"/><circle cx="654.9" cy="-13.7" r="2.8"/><circle cx="484.9" cy="-2.7" r="2.8"/><circle cx="40.2" cy="-12.4" r="2.8"/><circle cx="541.6" cy="418.9" r="2.8"/><circle cx="423.2" cy="186.3" r="2.8"/><circle cx="489.2" cy="215.8" r="2.8"/><circle cx="330.6" cy="294.1" r="2.8"/><circle cx="341.6" cy="294.1" r="2.8"/><circle cx="24.9" cy="158.6" r="2.8"/><circle cx="-5.6" cy="39.6" r="2.8"/><circle cx="591.9" cy="304.3" r="2.8"/><circle cx="530.2" cy="274.7" r="2.8"/><circle cx="33.0" cy="65.2" r="2.8"/><circle cx="213.2" cy="258.5" r="2.8"/><circle cx="467.5" cy="376.5" r="2.8"/><circle cx="478.5" cy="376.5" r="2.8"/><circle cx="462.5" cy="231.5" r="2.8"/><circle cx="484.0" cy="376.5" r="2.8"/><circle cx="489.5" cy="376.5" r="2.8"/><circle cx="473.5" cy="231.5" r="2.8"/><circle cx="541.8" cy="265.9" r="2.8"/><circle cx="157.9" cy="-23.7" r="2.8"/><circle cx="518.7" cy="320.4" r="2.8"/><circle cx="524.2" cy="320.4" r="2.8"/><circle cx="529.7" cy="320.4" r="2.8"/><circle cx="36.3" cy="447.2" r="2.8"/><circle cx="89.3" cy="231.2" r="2.8"/><circle cx="41.8" cy="447.2" r="2.8"/><circle cx="223.3" cy="125.3" r="2.8"/><circle cx="288.3" cy="130.8" r="2.8"/><circle cx="288.3" cy="136.3" r="2.8"/><circle cx="369.6" cy="303.0" r="2.8"/><circle cx="529.3" cy="364.0" r="2.8"/><circle cx="534.8" cy="364.0" r="2.8"/><circle cx="540.3" cy="364.0" r="2.8"/><circle cx="545.8" cy="364.0" r="2.8"/><circle cx="722.8" cy="13.2" r="2.8"/><circle cx="722.8" cy="18.7" r="2.8"/><circle cx="722.8" cy="24.2" r="2.8"/><circle cx="102.1" cy="-19.6" r="2.8"/><circle cx="84.6" cy="56.4" r="2.8"/><circle cx="107.6" cy="-19.6" r="2.8"/><circle cx="367.5" cy="65.7" r="2.8"/><circle cx="210.8" cy="207.1" r="2.8"/><circle cx="417.3" cy="119.0" r="2.8"/><circle cx="567.7" cy="253.7" r="2.8"/><circle cx="724.7" cy="342.2" r="2.8"/><circle cx="567.7" cy="270.2" r="2.8"/><circle cx="724.7" cy="347.7" r="2.8"/><circle cx="543.9" cy="48.1" r="2.8"/><circle cx="543.9" cy="53.6" r="2.8"/><circle cx="336.9" cy="96.6" r="2.8"/><circle cx="543.9" cy="59.1" r="2.8"/><circle cx="31.3" cy="298.4" r="2.8"/><circle cx="36.8" cy="298.4" r="2.8"/><circle cx="29.3" cy="167.4" r="2.8"/><circle cx="233.1" cy="280.2" r="2.8"/><circle cx="174.6" cy="62.2" r="2.8"/><circle cx="321.8" cy="140.7" r="2.8"/><circle cx="126.6" cy="57.2" r="2.8"/><circle cx="258.3" cy="120.0" r="2.8"/><circle cx="258.3" cy="125.5" r="2.8"/><circle cx="349.7" cy="-12.7" r="2.8"/><circle cx="437.7" cy="-44.2" r="2.8"/><circle cx="141.9" cy="173.4" r="2.8"/><circle cx="192.4" cy="351.4" r="2.8"/><circle cx="147.4" cy="173.4" r="2.8"/><circle cx="446.9" cy="-14.7" r="2.8"/><circle cx="446.9" cy="-3.7" r="2.8"/><circle cx="446.9" cy="7.3" r="2.8"/><circle cx="464.5" cy="283.9" r="2.8"/><circle cx="470.0" cy="283.9" r="2.8"/><circle cx="573.7" cy="198.6" r="2.8"/><circle cx="242.8" cy="110.6" r="2.8"/><circle cx="242.8" cy="121.6" r="2.8"/><circle cx="242.8" cy="127.1" r="2.8"/><circle cx="157.5" cy="164.3" r="2.8"/><circle cx="163.0" cy="164.3" r="2.8"/><circle cx="164.5" cy="-24.7" r="2.8"/><circle cx="174.0" cy="164.3" r="2.8"/><circle cx="170.0" cy="-24.7" r="2.8"/><circle cx="116.8" cy="284.1" r="2.8"/><circle cx="122.3" cy="284.1" r="2.8"/><circle cx="86.3" cy="139.1" r="2.8"/><circle cx="371.8" cy="9.8" r="2.8"/><circle cx="377.3" cy="9.8" r="2.8"/><circle cx="418.9" cy="150.9" r="2.8"/><circle cx="308.9" cy="180.9" r="2.8"/><circle cx="242.6" cy="48.4" r="2.8"/><circle cx="253.6" cy="48.4" r="2.8"/><circle cx="67.7" cy="-24.5" r="2.8"/><circle cx="640.4" cy="-58.4" r="2.8"/><circle cx="486.4" cy="11.1" r="2.8"/><circle cx="-3.2" cy="124.1" r="2.8"/><circle cx="-46.7" cy="253.1" r="2.8"/><circle cx="-41.2" cy="253.1" r="2.8"/><circle cx="405.4" cy="23.1" r="2.8"/><circle cx="405.4" cy="34.1" r="2.8"/><circle cx="360.8" cy="309.9" r="2.8"/><circle cx="369.8" cy="204.9" r="2.8"/><circle cx="366.3" cy="309.9" r="2.8"/><circle cx="371.8" cy="309.9" r="2.8"/><circle cx="377.3" cy="309.9" r="2.8"/><circle cx="386.3" cy="204.9" r="2.8"/><circle cx="391.8" cy="204.9" r="2.8"/><circle cx="455.5" cy="367.0" r="2.8"/><circle cx="461.0" cy="367.0" r="2.8"/><circle cx="472.0" cy="367.0" r="2.8"/><circle cx="239.6" cy="171.6" r="2.8"/><circle cx="113.6" cy="186.6" r="2.8"/><circle cx="239.6" cy="177.1" r="2.8"/><circle cx="239.6" cy="188.1" r="2.8"/><circle cx="473.2" cy="222.1" r="2.8"/><circle cx="484.2" cy="222.1" r="2.8"/><circle cx="197.8" cy="100.3" r="2.8"/><circle cx="275.8" cy="89.3" r="2.8"/><circle cx="586.6" cy="-32.9" r="2.8"/><circle cx="586.6" cy="-27.4" r="2.8"/><circle cx="336.7" cy="16.6" r="2.8"/><circle cx="402.8" cy="247.8" r="2.8"/><circle cx="408.3" cy="247.8" r="2.8"/><circle cx="413.8" cy="247.8" r="2.8"/><circle cx="419.3" cy="247.8" r="2.8"/><circle cx="104.8" cy="373.6" r="2.8"/><circle cx="42.8" cy="224.6" r="2.8"/><circle cx="110.3" cy="373.6" r="2.8"/><circle cx="115.8" cy="373.6" r="2.8"/><circle cx="53.8" cy="224.6" r="2.8"/><circle cx="59.3" cy="224.6" r="2.8"/><circle cx="126.8" cy="373.6" r="2.8"/><circle cx="675.4" cy="209.7" r="2.8"/><circle cx="601.3" cy="190.4" r="2.8"/><circle cx="282.9" cy="203.6" r="2.8"/><circle cx="282.9" cy="209.1" r="2.8"/><circle cx="282.9" cy="214.6" r="2.8"/><circle cx="812.4" cy="244.8" r="2.8"/><circle cx="329.0" cy="114.8" r="2.8"/><circle cx="360.5" cy="-0.2" r="2.8"/><circle cx="77.2" cy="217.7" r="2.8"/><circle cx="150.2" cy="46.7" r="2.8"/><circle cx="-83.5" cy="327.3" r="2.8"/><circle cx="307.0" cy="155.5" r="2.8"/><circle cx="307.0" cy="161.0" r="2.8"/><circle cx="297.4" cy="361.2" r="2.8"/><circle cx="348.4" cy="209.2" r="2.8"/><circle cx="302.9" cy="361.2" r="2.8"/><circle cx="12.6" cy="310.5" r="2.8"/><circle cx="93.6" cy="87.5" r="2.8"/><circle cx="564.3" cy="190.5" r="2.8"/><circle cx="147.3" cy="40.8" r="2.8"/><circle cx="293.3" cy="63.3" r="2.8"/><circle cx="147.3" cy="51.8" r="2.8"/><circle cx="485.7" cy="16.2" r="2.8"/></g></svg>
<svg style="left:110.7px;top:36.5px" width="16" height="12" viewBox="0 0 16 12" ><clipPath id="lc"><rect x="0" y="0" width="15.6" height="11.5" rx="3.2"/></clipPath><g clip-path="url(#lc)"><rect x="0" y="0" width="4.3" height="3.0" rx="0.6" fill="#fff"/><rect x="0" y="4.2" width="4.3" height="3.0" rx="0.6" fill="#fff"/><rect x="0" y="8.5" width="4.3" height="3.0" rx="0.6" fill="#fff"/><rect x="5.6" y="0" width="4.4" height="3.0" rx="0.6" fill="#fff"/><rect x="5.6" y="8.5" width="4.4" height="3.0" rx="0.6" fill="#fff"/><rect x="11.3" y="0" width="4.3" height="3.0" rx="0.6" fill="#fff"/><rect x="11.3" y="4.2" width="4.3" height="3.0" rx="0.6" fill="#fff"/><rect x="11.3" y="8.5" width="4.3" height="3.0" rx="0.6" fill="#fff"/></g></svg>
<svg style="left:296px;top:38px" width="11" height="10" viewBox="0 0 11 10" ><rect x="0" y="0" width="10" height="1.8" fill="#e6efe6"/><rect x="0" y="3.4" width="10" height="1.8" fill="#e6efe6"/><rect x="0" y="7.4" width="10" height="1.8" fill="#e6efe6"/></svg>
<svg style="left:785px;top:38px" width="14" height="10" viewBox="0 0 14 10" ><path d="M0.8 0.8 L5.2 3.8 L0.8 6.8" fill="none" stroke="#e6efe6" stroke-width="1.6"/><rect x="6" y="7.2" width="6.5" height="1.5" fill="#e6efe6"/></svg>
<svg style="left:815px;top:36px" width="12" height="13" viewBox="0 0 12 13" ><path d="M5.5 1.2 C2.8 1.2 2.2 3.5 2.2 5.5 L2.2 8.2 L0.8 9.8 L10.2 9.8 L8.8 8.2 L8.8 5.5 C8.8 3.5 8.2 1.2 5.5 1.2 Z" fill="none" stroke="#e6efe6" stroke-width="1.3" stroke-linejoin="round"/><rect x="5" y="0" width="1.2" height="1.6" fill="#e6efe6"/><path d="M4 11 A1.6 1.6 0 0 0 7 11" fill="#e6efe6" stroke="#e6efe6" stroke-width="1"/></svg>
<svg style="left:831px;top:41px" width="6" height="3" viewBox="0 0 6 3" ><path d="M0 0 L5.5 0 L2.75 2.6 Z" fill="#e6efe6"/></svg>
<svg style="left:853.5px;top:36.5px" width="12" height="12" viewBox="0 0 12 12" ><circle cx="5.8" cy="5.8" r="5.7" fill="#eef3ee"/><path d="M3.8 4.4 C3.8 2.9 4.8 2.3 5.9 2.3 C7.1 2.3 8 3.1 8 4.2 C8 5.7 6.3 5.7 6.3 7.3" fill="none" stroke="#3e8b4d" stroke-width="1.6"/><rect x="5.4" y="8.3" width="1.8" height="1.7" fill="#3e8b4d"/></svg>
<svg style="left:870px;top:41px" width="6" height="3" viewBox="0 0 6 3" ><path d="M0 0 L5.5 0 L2.75 2.6 Z" fill="#e6efe6"/></svg>
<svg style="left:892.5px;top:34.5px" width="16" height="16" viewBox="0 0 16 16" ><defs><clipPath id="av"><circle cx="7.6" cy="7.7" r="7.6"/></clipPath></defs><circle cx="7.6" cy="7.7" r="7.6" fill="#8e949f"/><g clip-path="url(#av)"><circle cx="7.6" cy="5.6" r="3.2" fill="#f2f2f2"/><path d="M1.5 15.5 C1.5 11 4 9.5 7.6 9.5 C11.2 9.5 13.7 11 13.7 15.5 Z" fill="#f2f2f2"/></g></svg>
<svg style="left:911px;top:41px" width="6" height="3" viewBox="0 0 6 3" ><path d="M0 0 L5.5 0 L2.75 2.6 Z" fill="#e6efe6"/></svg>
<svg style="left:109.5px;top:61.5px" width="14" height="13" viewBox="0 0 14 13" ><polygon points="6.30,0.80 7.95,4.33 11.82,4.81 8.96,7.47 9.71,11.29 6.30,9.40 2.89,11.29 3.64,7.47 0.78,4.81 4.65,4.33" fill="#f0b83a" stroke="#f0b83a" stroke-width="0.8" stroke-linejoin="round"/></svg>
<svg style="left:271px;top:64.5px" width="10" height="7" viewBox="0 0 10 7" ><path d="M1.5 1.5 L4.9 4.9 L8.3 1.5" fill="none" stroke="#3e8b4d" stroke-width="2"/></svg>
<svg style="left:269.5px;top:84.0px" width="13" height="13" viewBox="0 0 13 13" ><polygon points="6.50,1.00 8.09,4.42 11.83,4.87 9.07,7.43 9.79,11.13 6.50,9.30 3.21,11.13 3.93,7.43 1.17,4.87 4.91,4.42" fill="#f0b83a" stroke="#f0b83a" stroke-width="0.8" stroke-linejoin="round"/></svg>
<svg style="left:269.5px;top:106.4px" width="13" height="13" viewBox="0 0 13 13" ><polygon points="6.50,1.00 8.09,4.42 11.83,4.87 9.07,7.43 9.79,11.13 6.50,9.30 3.21,11.13 3.93,7.43 1.17,4.87 4.91,4.42" fill="#f0b83a" stroke="#f0b83a" stroke-width="0.8" stroke-linejoin="round"/></svg>
<svg style="left:269.5px;top:128.7px" width="13" height="13" viewBox="0 0 13 13" ><polygon points="6.50,1.00 8.09,4.42 11.83,4.87 9.07,7.43 9.79,11.13 6.50,9.30 3.21,11.13 3.93,7.43 1.17,4.87 4.91,4.42" fill="#f0b83a" stroke="#f0b83a" stroke-width="0.8" stroke-linejoin="round"/></svg>
<svg style="left:269.5px;top:151.0px" width="13" height="13" viewBox="0 0 13 13" ><polygon points="6.50,1.00 8.09,4.42 11.83,4.87 9.07,7.43 9.79,11.13 6.50,9.30 3.21,11.13 3.93,7.43 1.17,4.87 4.91,4.42" fill="#f0b83a" stroke="#f0b83a" stroke-width="0.8" stroke-linejoin="round"/></svg>
<svg style="left:272.5px;top:174.8px" width="8" height="9" viewBox="0 0 8 9" ><path d="M1.8 1 L5.2 4.3 L1.8 7.6" fill="none" stroke="#222" stroke-width="1.8"/></svg>
<svg style="left:272.5px;top:197.0px" width="8" height="9" viewBox="0 0 8 9" ><path d="M1.8 1 L5.2 4.3 L1.8 7.6" fill="none" stroke="#222" stroke-width="1.8"/></svg>
<svg style="left:272.5px;top:219.2px" width="8" height="9" viewBox="0 0 8 9" ><path d="M1.8 1 L5.2 4.3 L1.8 7.6" fill="none" stroke="#222" stroke-width="1.8"/></svg>
<svg style="left:272.5px;top:241.4px" width="8" height="9" viewBox="0 0 8 9" ><path d="M1.8 1 L5.2 4.3 L1.8 7.6" fill="none" stroke="#222" stroke-width="1.8"/></svg>
<svg style="left:272.5px;top:263.6px" width="8" height="9" viewBox="0 0 8 9" ><path d="M1.8 1 L5.2 4.3 L1.8 7.6" fill="none" stroke="#222" stroke-width="1.8"/></svg>
<svg style="left:272.5px;top:285.8px" width="8" height="9" viewBox="0 0 8 9" ><path d="M1.8 1 L5.2 4.3 L1.8 7.6" fill="none" stroke="#222" stroke-width="1.8"/></svg>
<svg style="left:110px;top:173.5px" width="14" height="11" viewBox="0 0 14 11" ><path d="M0.6 10.2 C0.6 4.6 3.3 0.8 6.9 0.8 C10.5 0.8 13.2 4.6 13.2 10.2 Z" fill="#2b2b2b"/><circle cx="3.2" cy="6.5" r="0.9" fill="#fff"/><circle cx="10.6" cy="6.5" r="0.9" fill="#fff"/><circle cx="4.6" cy="3.6" r="0.8" fill="#fff"/><path d="M6.2 9 L8.3 3" stroke="#fff" stroke-width="1.3"/><circle cx="6.6" cy="8.6" r="1.5" fill="#fff"/></svg>
<svg style="left:110.2px;top:195px" width="13" height="13" viewBox="0 0 13 13" ><path d="M1.3 4.2 L3.8 6.7 M5.3 3.5 L8.1 1.1 M8.2 5.4 L11.1 8.2 M3.6 11.1 L6.7 8.4" stroke="#333" stroke-width="1.6" stroke-linecap="round"/><circle cx="3.5" cy="1.1" r="0.95" fill="#333"/><circle cx="11.1" cy="3.9" r="0.95" fill="#333"/><circle cx="1.05" cy="8.4" r="0.95" fill="#333"/><circle cx="8.2" cy="11.3" r="0.95" fill="#333"/></svg>
<svg style="left:112px;top:217px" width="9" height="13" viewBox="0 0 9 13" ><path d="M0 0.3 L5.6 0.3 L8.6 3.3 L8.6 12.2 L0 12.2 Z" fill="#2b2b2b"/><path d="M5.6 0.3 L5.6 3.3 L8.6 3.3" fill="#fff"/></svg>
<svg style="left:111px;top:240.5px" width="11" height="11" viewBox="0 0 11 11" ><path d="M2.2 0.3 L7 0.3 L9.4 2.7 L9.4 6.5 L2.2 6.5 Z" fill="#2b2b2b"/><path d="M0.7 9.6 L0.7 6.8 L3 6.8 C3.5 8 4.5 8.2 6 8.2 C8 8.2 8.8 7.6 9.2 6.8 L10.3 6.8 L10.3 9.6 Z" fill="none" stroke="#2b2b2b" stroke-width="1.3"/></svg>
<svg style="left:110.7px;top:262px" width="11" height="11" viewBox="0 0 11 11" ><g transform="translate(5.5 5.5)"><rect x="-1.6" y="-5.5" width="3.2" height="3" rx="0.6" fill="#2b2b2b" transform="rotate(0)"/><rect x="-1.6" y="-5.5" width="3.2" height="3" rx="0.6" fill="#2b2b2b" transform="rotate(60)"/><rect x="-1.6" y="-5.5" width="3.2" height="3" rx="0.6" fill="#2b2b2b" transform="rotate(120)"/><rect x="-1.6" y="-5.5" width="3.2" height="3" rx="0.6" fill="#2b2b2b" transform="rotate(180)"/><rect x="-1.6" y="-5.5" width="3.2" height="3" rx="0.6" fill="#2b2b2b" transform="rotate(240)"/><rect x="-1.6" y="-5.5" width="3.2" height="3" rx="0.6" fill="#2b2b2b" transform="rotate(300)"/><circle r="3.9" fill="#2b2b2b"/><circle r="1.6" fill="#fff"/></g></svg>
<svg style="left:110.7px;top:285.5px" width="12" height="9" viewBox="0 0 12 9" ><path d="M0.6 0 L0.6 8.1 L11.8 8.1" fill="none" stroke="#2b2b2b" stroke-width="1.2"/><rect x="2.6" y="4.8" width="1.3" height="2.4" fill="#2b2b2b"/><rect x="4.9" y="2" width="1.3" height="5.2" fill="#2b2b2b"/><rect x="7.2" y="3.6" width="1.3" height="3.6" fill="#2b2b2b"/><rect x="9.5" y="1.2" width="1.3" height="6" fill="#2b2b2b"/></svg>
<svg style="left:158.9px;top:538.3px" width="70" height="9" viewBox="0 0 70 9" ><rect x="0" y="0" width="8.6" height="2.2" fill="#2d2d2d"/><rect x="0" y="0" width="2.2" height="8.4" fill="#2d2d2d"/><rect x="0" y="3.3" width="7.6" height="2.2" fill="#2d2d2d"/><g transform="translate(9.8 0)"><rect x="0" y="0" width="3.4" height="2.6" fill="#d32f2f"/><rect x="4" y="0" width="3.3" height="2.6" fill="#d32f2f"/><rect x="7.9" y="0" width="3.4" height="2.6" fill="#d32f2f"/><rect x="0" y="2.9" width="2.6" height="2.6" fill="#d32f2f"/><rect x="8.7" y="2.9" width="2.6" height="2.6" fill="#d32f2f"/><rect x="0" y="5.8" width="3.4" height="2.6" fill="#d32f2f"/><rect x="4" y="5.8" width="3.3" height="2.6" fill="#d32f2f"/><rect x="7.9" y="5.8" width="3.4" height="2.6" fill="#d32f2f"/></g><path d="M22.3 8.4 L22.3 0 L29 0 Q30.5 0 30.5 1.5 L30.5 4.4 Q30.5 5.6 29.2 5.6 L28.6 5.6 L30.9 8.4 L28.3 8.4 L26.2 5.6 L24.5 5.6 L24.5 8.4 Z M24.5 2.1 L24.5 3.6 L28.3 3.6 L28.3 2.1 Z" fill="#2d2d2d" fill-rule="evenodd"/><rect x="30.9" y="0" width="7.8" height="2.2" fill="#2d2d2d"/><rect x="33.85" y="0" width="2.2" height="8.4" fill="#2d2d2d"/><rect x="39.9" y="0" width="2.2" height="8.4" fill="#2d2d2d"/><path d="M43.8 8.4 L43.8 0 L50.35 0 Q52.35 0 52.35 2 L52.35 8.4 L50.15 8.4 L50.15 2.2 L46 2.2 L46 8.4 Z" fill="#2d2d2d"/><rect x="53.5" y="0" width="7.4" height="2.2" fill="#2d2d2d"/><rect x="53.5" y="0" width="2.2" height="8.4" fill="#2d2d2d"/><rect x="53.5" y="3.3" width="6.6" height="2.2" fill="#2d2d2d"/><rect x="53.5" y="6.2" width="7.4" height="2.2" fill="#2d2d2d"/><rect x="61.3" y="0" width="7.8" height="2.2" fill="#2d2d2d"/><rect x="64.25" y="0" width="2.2" height="8.4" fill="#2d2d2d"/></svg>
<svg style="left:900.5px;top:77.8px" width="12" height="12" viewBox="0 0 12 12" ><path d="M2.2 5.5 A3.8 3.8 0 0 1 9 3.2" fill="none" stroke="#d8d8d8" stroke-width="1.3"/><path d="M9.8 1 L9.8 4.3 L6.6 4.3 Z" fill="#d8d8d8"/><path d="M9.3 6 A3.8 3.8 0 0 1 2.5 8.3" fill="none" stroke="#d8d8d8" stroke-width="1.3"/><path d="M1.7 10.5 L1.7 7.2 L4.9 7.2 Z" fill="#d8d8d8"/></svg>
<svg style="left:900.5px;top:381.8px" width="12" height="12" viewBox="0 0 12 12" ><path d="M2.2 5.5 A3.8 3.8 0 0 1 9 3.2" fill="none" stroke="#d8d8d8" stroke-width="1.3"/><path d="M9.8 1 L9.8 4.3 L6.6 4.3 Z" fill="#d8d8d8"/><path d="M9.3 6 A3.8 3.8 0 0 1 2.5 8.3" fill="none" stroke="#d8d8d8" stroke-width="1.3"/><path d="M1.7 10.5 L1.7 7.2 L4.9 7.2 Z" fill="#d8d8d8"/></svg>
<svg style="left:324.5px;top:131.5px" width="27" height="31" viewBox="0 0 27 31" ><rect x="3.6" y="3.4" width="20.6" height="26.4" rx="1" fill="#fff" stroke="#4a9a56" stroke-width="1.1"/><rect x="2" y="1.9" width="20.6" height="26.4" rx="1" fill="#fff" stroke="#4a9a56" stroke-width="1.1"/><rect x="0.6" y="0.6" width="20.6" height="26.4" rx="1" fill="#fff" stroke="#4a9a56" stroke-width="1.2"/><circle cx="12.1" cy="9" r="5.3" fill="#fff" stroke="#4a9a56" stroke-width="1.3"/><path d="M15.9 12.8 L26.4 20" stroke="#4a9a56" stroke-width="1.9" stroke-linecap="round"/><rect x="4.2" y="16.6" width="13.4" height="1.3" fill="#4a9a56"/><rect x="4.2" y="19.6" width="13.4" height="1.3" fill="#4a9a56"/><rect x="4.2" y="22.8" width="13.4" height="1.3" fill="#4a9a56"/><rect x="9.6" y="9.2" width="1.4" height="2.5" fill="#4a9a56"/><rect x="12.3" y="6.4" width="1.5" height="5.3" fill="#4a9a56"/></svg>
<svg style="left:324.5px;top:232px" width="27" height="31" viewBox="0 0 27 31" ><rect x="3.6" y="3.4" width="20.6" height="26.4" rx="1" fill="#fff" stroke="#4a9a56" stroke-width="1.1"/><rect x="2" y="1.9" width="20.6" height="26.4" rx="1" fill="#fff" stroke="#4a9a56" stroke-width="1.1"/><rect x="0.6" y="0.6" width="20.6" height="26.4" rx="1" fill="#fff" stroke="#4a9a56" stroke-width="1.2"/><circle cx="12.1" cy="9" r="5.3" fill="#fff" stroke="#4a9a56" stroke-width="1.3"/><path d="M15.9 12.8 L26.4 20" stroke="#4a9a56" stroke-width="1.9" stroke-linecap="round"/><rect x="4.2" y="16.6" width="13.4" height="1.3" fill="#4a9a56"/><rect x="4.2" y="19.6" width="13.4" height="1.3" fill="#4a9a56"/><rect x="4.2" y="22.8" width="13.4" height="1.3" fill="#4a9a56"/><circle cx="12.1" cy="9" r="3.6" fill="none" stroke="#4a9a56" stroke-width="0.6"/><text x="12.1" y="10.7" font-family="Liberation Sans" font-size="4.4" fill="#4a9a56" text-anchor="middle">VM</text></svg>
<svg style="left:330px;top:173px" width="16" height="21" viewBox="0 0 16 21" ><path d="M4.6 0.9 L14.2 0.9 C14.8 0.9 15.1 1.2 15.1 1.8 L15.1 18.9 C15.1 19.5 14.8 19.8 14.2 19.8 L1.8 19.8 C1.2 19.8 0.9 19.5 0.9 18.9 L0.9 4.6 Z" fill="#fff" stroke="#4a9a56" stroke-width="1.7" stroke-linejoin="round"/><path d="M0.9 4.6 L4.6 4.6 L4.6 0.9 Z" fill="#4a9a56" stroke="#4a9a56" stroke-width="1"/><text x="8.2" y="12.2" font-family="Liberation Sans" font-weight="700" font-size="4.2" fill="#4a9a56" text-anchor="middle" letter-spacing="-0.2">URL</text></svg>
<svg style="left:387px;top:173px" width="16" height="21" viewBox="0 0 16 21" ><path d="M4.6 0.9 L14.2 0.9 C14.8 0.9 15.1 1.2 15.1 1.8 L15.1 18.9 C15.1 19.5 14.8 19.8 14.2 19.8 L1.8 19.8 C1.2 19.8 0.9 19.5 0.9 18.9 L0.9 4.6 Z" fill="#fff" stroke="#4a9a56" stroke-width="1.7" stroke-linejoin="round"/><path d="M0.9 4.6 L4.6 4.6 L4.6 0.9 Z" fill="#4a9a56" stroke="#4a9a56" stroke-width="1"/><text x="8.2" y="12.2" font-family="Liberation Sans" font-weight="700" font-size="4.2" fill="#4a9a56" text-anchor="middle" letter-spacing="-0.2">PDF</text></svg>
<svg style="left:443.5px;top:173px" width="16" height="21" viewBox="0 0 16 21" ><path d="M4.6 0.9 L14.2 0.9 C14.8 0.9 15.1 1.2 15.1 1.8 L15.1 18.9 C15.1 19.5 14.8 19.8 14.2 19.8 L1.8 19.8 C1.2 19.8 0.9 19.5 0.9 18.9 L0.9 4.6 Z" fill="#fff" stroke="#4a9a56" stroke-width="1.7" stroke-linejoin="round"/><path d="M0.9 4.6 L4.6 4.6 L4.6 0.9 Z" fill="#4a9a56" stroke="#4a9a56" stroke-width="1"/><circle cx="8" cy="8" r="2" fill="#4a9a56"/><path d="M4.3 14.8 C4.3 11.6 5.8 10.8 8 10.8 C10.2 10.8 11.7 11.6 11.7 14.8 Z" fill="#4a9a56"/><rect x="8.6" y="12" width="3.3" height="2.6" fill="#fff" stroke="#4a9a56" stroke-width="0.7"/></svg>
<svg style="left:330.2px;top:274px" width="16" height="21" viewBox="0 0 16 21" ><path d="M4.6 0.9 L14.2 0.9 C14.8 0.9 15.1 1.2 15.1 1.8 L15.1 18.9 C15.1 19.5 14.8 19.8 14.2 19.8 L1.8 19.8 C1.2 19.8 0.9 19.5 0.9 18.9 L0.9 4.6 Z" fill="#fff" stroke="#4a9a56" stroke-width="1.7" stroke-linejoin="round"/><path d="M0.9 4.6 L4.6 4.6 L4.6 0.9 Z" fill="#4a9a56" stroke="#4a9a56" stroke-width="1"/><path d="M4.3 5.8 L9.5 4.3 L11.6 5 L11.6 15.5 L9.5 16.3 L4.3 14.8 Z" fill="#4a9a56"/><rect x="6.6" y="6.8" width="2.4" height="7" fill="#fff"/></svg>
<svg style="left:387px;top:274px" width="16" height="21" viewBox="0 0 16 21" ><path d="M4.6 0.9 L14.2 0.9 C14.8 0.9 15.1 1.2 15.1 1.8 L15.1 18.9 C15.1 19.5 14.8 19.8 14.2 19.8 L1.8 19.8 C1.2 19.8 0.9 19.5 0.9 18.9 L0.9 4.6 Z" fill="#fff" stroke="#4a9a56" stroke-width="1.7" stroke-linejoin="round"/><path d="M0.9 4.6 L4.6 4.6 L4.6 0.9 Z" fill="#4a9a56" stroke="#4a9a56" stroke-width="1"/><text x="8.2" y="12.2" font-family="Liberation Sans" font-weight="700" font-size="4.2" fill="#4a9a56" text-anchor="middle" letter-spacing="-0.2">JSE</text></svg>
<svg style="left:458.5px;top:274px" width="16" height="21" viewBox="0 0 16 21" ><path d="M4.6 0.9 L14.2 0.9 C14.8 0.9 15.1 1.2 15.1 1.8 L15.1 18.9 C15.1 19.5 14.8 19.8 14.2 19.8 L1.8 19.8 C1.2 19.8 0.9 19.5 0.9 18.9 L0.9 4.6 Z" fill="#fff" stroke="#4a9a56" stroke-width="1.7" stroke-linejoin="round"/><path d="M0.9 4.6 L4.6 4.6 L4.6 0.9 Z" fill="#4a9a56" stroke="#4a9a56" stroke-width="1"/><text x="8.2" y="12.2" font-family="Liberation Sans" font-weight="700" font-size="4.2" fill="#4a9a56" text-anchor="middle" letter-spacing="-0.2">PDF</text></svg>
<svg style="left:558.5px;top:132.2px" width="28" height="28" viewBox="0 0 28 28" ><path d="M11.04 1.29 A12.0 12.0 0 0 1 23.67 4.67" fill="none" stroke="#3a7fc5" stroke-width="1.6"/><path d="M26.39 9.80 A12.0 12.0 0 0 1 25.54 17.96" fill="none" stroke="#3a7fc5" stroke-width="1.6"/><path d="M19.63 23.66 A12.0 12.0 0 0 1 10.25 23.83" fill="none" stroke="#3a7fc5" stroke-width="1.6"/><path d="M4.06 18.15 A12.0 12.0 0 0 1 3.21 9.39" fill="none" stroke="#3a7fc5" stroke-width="1.6"/><g transform="translate(6.26 4.21) rotate(315)"><path d="M-2.2 -1.4 L2.2 0 L-2.2 1.6 Z" fill="#3a7fc5"/></g><g transform="translate(23.24 21.19) rotate(135)"><path d="M-2.2 -1.4 L2.2 0 L-2.2 1.6 Z" fill="#3a7fc5"/></g><path d="M9.25 18.20 L1.55 25.90" stroke="#3a7fc5" stroke-width="3.6" stroke-linecap="round"/><circle cx="14.75" cy="12.7" r="6.8" fill="#fff" stroke="#3a7fc5" stroke-width="2.3"/><path d="M12.1 9.3 L17.4 9.3 L14.75 12.7 L17.4 16.1 L12.1 16.1 L14.75 12.7 Z" fill="none" stroke="#3a7fc5" stroke-width="1.2"/><path d="M12.6 15.6 L14.75 13.5 L16.9 15.6 Z" fill="#3a7fc5"/></svg>
<svg style="left:558.5px;top:233.5px" width="28" height="28" viewBox="0 0 28 28" ><path d="M11.04 1.29 A12.0 12.0 0 0 1 23.67 4.67" fill="none" stroke="#3a7fc5" stroke-width="1.6"/><path d="M26.39 9.80 A12.0 12.0 0 0 1 25.54 17.96" fill="none" stroke="#3a7fc5" stroke-width="1.6"/><path d="M19.63 23.66 A12.0 12.0 0 0 1 10.25 23.83" fill="none" stroke="#3a7fc5" stroke-width="1.6"/><path d="M4.06 18.15 A12.0 12.0 0 0 1 3.21 9.39" fill="none" stroke="#3a7fc5" stroke-width="1.6"/><g transform="translate(6.26 4.21) rotate(315)"><path d="M-2.2 -1.4 L2.2 0 L-2.2 1.6 Z" fill="#3a7fc5"/></g><g transform="translate(23.24 21.19) rotate(135)"><path d="M-2.2 -1.4 L2.2 0 L-2.2 1.6 Z" fill="#3a7fc5"/></g><path d="M9.25 18.20 L1.55 25.90" stroke="#3a7fc5" stroke-width="3.6" stroke-linecap="round"/><circle cx="14.75" cy="12.7" r="6.8" fill="#fff" stroke="#3a7fc5" stroke-width="2.3"/><circle cx="14.75" cy="12.7" r="4.4" fill="none" stroke="#3a7fc5" stroke-width="0.9"/><text x="14.75" y="14.4" font-family="Liberation Sans" font-size="4.6" font-weight="700" fill="#3a7fc5" text-anchor="middle">VM</text></svg>
<svg style="left:558.5px;top:283.6px" width="28" height="28" viewBox="0 0 28 28" ><path d="M11.04 1.29 A12.0 12.0 0 0 1 23.67 4.67" fill="none" stroke="#3a7fc5" stroke-width="1.6"/><path d="M26.39 9.80 A12.0 12.0 0 0 1 25.54 17.96" fill="none" stroke="#3a7fc5" stroke-width="1.6"/><path d="M19.63 23.66 A12.0 12.0 0 0 1 10.25 23.83" fill="none" stroke="#3a7fc5" stroke-width="1.6"/><path d="M4.06 18.15 A12.0 12.0 0 0 1 3.21 9.39" fill="none" stroke="#3a7fc5" stroke-width="1.6"/><g transform="translate(6.26 4.21) rotate(315)"><path d="M-2.2 -1.4 L2.2 0 L-2.2 1.6 Z" fill="#3a7fc5"/></g><g transform="translate(23.24 21.19) rotate(135)"><path d="M-2.2 -1.4 L2.2 0 L-2.2 1.6 Z" fill="#3a7fc5"/></g><path d="M9.25 18.20 L1.55 25.90" stroke="#3a7fc5" stroke-width="3.6" stroke-linecap="round"/><circle cx="14.75" cy="12.7" r="6.8" fill="#fff" stroke="#3a7fc5" stroke-width="2.3"/><ellipse cx="14.75" cy="13" rx="2.6" ry="3.4" fill="#3a7fc5"/><path d="M10.9 10.5 L18.6 15.5 M18.6 10.5 L10.9 15.5 M10.3 13 L19.2 13" stroke="#3a7fc5" stroke-width="0.8"/><circle cx="24.2" cy="24" r="3.1" fill="#fff" stroke="#3a7fc5" stroke-width="1.2"/><path d="M24.2 22.3 L24.2 24.2 L25.5 24.2" fill="none" stroke="#3a7fc5" stroke-width="0.8"/></svg>
<svg style="left:562px;top:183px" width="22" height="28" viewBox="0 0 22 28" ><path d="M6.2 1.6 L18.3 1.6 Q19.8 1.6 19.8 3.1 L19.8 23.7 Q19.8 25.2 18.3 25.2 L13.6 25.2 M7.4 25.2 L2.7 25.2 Q1.2 25.2 1.2 23.7 L1.2 6.6 L6.2 1.6" fill="none" stroke="#3a7fc5" stroke-width="1.9" stroke-linejoin="round"/><path d="M1.2 6.6 L6.2 1.6 L6.2 6.6 Z" fill="#3a7fc5" stroke="#3a7fc5" stroke-width="1.2" stroke-linejoin="round"/><circle cx="10.5" cy="14.6" r="4.4" fill="none" stroke="#3a7fc5" stroke-width="1.7"/><rect x="9.05" y="18.8" width="2.9" height="8.2" fill="#3a7fc5"/></svg>
<svg style="left:792.5px;top:133.2px" width="30" height="26" viewBox="0 0 30 26" ><path d="M14.5 1.6 C15.3 1.6 15.8 2 16.3 2.8 L27.6 21.8 C28.4 23.3 27.6 24.6 26 24.6 L3 24.6 C1.4 24.6 0.6 23.3 1.4 21.8 L12.7 2.8 C13.2 2 13.7 1.6 14.5 1.6 Z" fill="#fff" fill-opacity="0.85" stroke="#4aa2d4" stroke-width="2.1" stroke-linejoin="round"/><circle cx="14.5" cy="15.5" r="5.8" fill="none" stroke="#4aa2d4" stroke-width="0.9"/><path d="M14.5 9.7 L14.5 21.3 M8.7 15.5 L20.3 15.5 M10.5 11.5 L18.5 19.5 M18.5 11.5 L10.5 19.5" stroke="#4aa2d4" stroke-width="0.7"/><rect x="12.3" y="13.6" width="4.4" height="3.6" fill="#4aa2d4"/></svg>
<svg style="left:792.7px;top:184px" width="30" height="26" viewBox="0 0 30 26" ><path d="M14.5 1.6 C15.3 1.6 15.8 2 16.3 2.8 L27.6 21.8 C28.4 23.3 27.6 24.6 26 24.6 L3 24.6 C1.4 24.6 0.6 23.3 1.4 21.8 L12.7 2.8 C13.2 2 13.7 1.6 14.5 1.6 Z" fill="#fff" fill-opacity="0.85" stroke="#c8383a" stroke-width="2.1" stroke-linejoin="round"/><text x="14.5" y="15" font-family="Liberation Sans" font-size="6" font-weight="700" fill="#c8383a" text-anchor="middle">0</text><text x="14.5" y="21.6" font-family="Liberation Sans" font-size="6.4" font-weight="700" fill="#c8383a" text-anchor="middle" letter-spacing="-0.2">Day</text></svg>
<svg style="left:792.7px;top:234px" width="30" height="26" viewBox="0 0 30 26" ><path d="M14.5 1.6 C15.3 1.6 15.8 2 16.3 2.8 L27.6 21.8 C28.4 23.3 27.6 24.6 26 24.6 L3 24.6 C1.4 24.6 0.6 23.3 1.4 21.8 L12.7 2.8 C13.2 2 13.7 1.6 14.5 1.6 Z" fill="#fff" fill-opacity="0.85" stroke="#e8792c" stroke-width="2.1" stroke-linejoin="round"/><g transform="rotate(0 14.5 16)"><path d="M12 10.2 A3.2 3.2 0 1 0 17 10.2" fill="none" stroke="#e8792c" stroke-width="1.5"/></g><g transform="rotate(120 14.5 16)"><path d="M12 10.2 A3.2 3.2 0 1 0 17 10.2" fill="none" stroke="#e8792c" stroke-width="1.5"/></g><g transform="rotate(240 14.5 16)"><path d="M12 10.2 A3.2 3.2 0 1 0 17 10.2" fill="none" stroke="#e8792c" stroke-width="1.5"/></g><circle cx="14.5" cy="16" r="1.3" fill="none" stroke="#e8792c" stroke-width="0.9"/><circle cx="14.5" cy="16" r="3.6" fill="none" stroke="#e8792c" stroke-width="0.6"/></svg>
<svg style="left:792.7px;top:284.5px" width="30" height="26" viewBox="0 0 30 26" ><path d="M14.5 1.6 C15.3 1.6 15.8 2 16.3 2.8 L27.6 21.8 C28.4 23.3 27.6 24.6 26 24.6 L3 24.6 C1.4 24.6 0.6 23.3 1.4 21.8 L12.7 2.8 C13.2 2 13.7 1.6 14.5 1.6 Z" fill="#fff" fill-opacity="0.85" stroke="#e8792c" stroke-width="2.1" stroke-linejoin="round"/><text x="14.5" y="20.8" font-family="Liberation Sans" font-size="7.4" font-weight="700" fill="#e8792c" text-anchor="middle" letter-spacing="-0.3">URL</text></svg>
<svg style="left:318.2px;top:411.3px" width="24" height="25" viewBox="0 0 24 25" ><path d="M11.80 1.00 A2.79 2.79 0 0 1 16.90 2.47 A2.88 2.88 0 0 1 20.63 6.50 A2.98 2.98 0 0 1 22.00 12.00 A2.98 2.98 0 0 1 20.63 17.50 A2.88 2.88 0 0 1 16.90 21.53 A2.79 2.79 0 0 1 11.80 23.00 A2.79 2.79 0 0 1 6.70 21.53 A2.88 2.88 0 0 1 2.97 17.50 A2.98 2.98 0 0 1 1.60 12.00 A2.98 2.98 0 0 1 2.97 6.50 A2.88 2.88 0 0 1 6.70 2.47 A2.79 2.79 0 0 1 11.80 1.00" fill="none" stroke="#3f9147" stroke-width="1.7"/><path d="M11.8 1.5 L11.8 7.6 M11.8 16.6 L11.8 22.8 M8.6 3.6 C6.8 4.4 6.8 6.2 8.2 6.8 M15 3.6 C16.8 4.4 16.8 6.2 15.4 6.8 M3.2 10 C4.4 10.8 4.6 12 4.4 13 M20.4 10 C19.2 10.8 19 12 19.2 13 M7 18.2 C7.6 19.6 8.6 20 9.6 19.6 M16.6 18.2 C16 19.6 15 20 14 19.6" fill="none" stroke="#3f9147" stroke-width="1.1"/><rect x="5.2" y="7.9" width="13.2" height="8.7" rx="0.8" fill="#3f9147"/><text x="11.8" y="15" font-family="Liberation Sans" font-size="7.6" font-weight="700" fill="#fff" text-anchor="middle" style="text-rendering:geometricPrecision">AI</text></svg>
<svg style="left:367.4px;top:414.2px" width="27" height="22" viewBox="0 0 27 22" ><path d="M6 15.2 C2.5 15 0.9 12.8 0.9 10.6 C0.9 8.2 2.8 6.4 5.2 6.4 C5.8 4.2 7.6 2.6 9.8 2.6 C10.8 2.6 11.6 2.9 12.4 3.4 C13.6 1.6 15.6 0.6 17.6 0.6 C21 0.6 23.4 3 23.6 6.2 C25 6.8 25.7 8.4 25.7 10.2 C25.7 13 23.8 15 20.5 15.2" fill="none" stroke="#3f9147" stroke-width="1.9" stroke-linecap="round"/><path d="M13.55 8.6 L18.2 10.2 L18.2 14.6 C18.2 17.6 16.2 19.4 13.55 20.6 C10.9 19.4 8.9 17.6 8.9 14.6 L8.9 10.2 Z" fill="#fff" stroke="#3f9147" stroke-width="1.4" stroke-linejoin="round"/><rect x="11.7" y="12.9" width="3.7" height="3.2" rx="0.8" fill="none" stroke="#3f9147" stroke-width="1.2"/></svg>
<svg style="left:417.2px;top:410.1px" width="28" height="28" viewBox="0 0 28 28" ><ellipse cx="13.5" cy="13" rx="6.4" ry="12.2" fill="none" stroke="#3f9147" stroke-width="1.4"/><path d="M1.3 13 L25.7 13 M3.2 6.2 L23.8 6.2 M3.2 19.8 L23.8 19.8 M13.5 0.8 L13.5 25.2" stroke="#3f9147" stroke-width="1.4"/><circle cx="13.5" cy="13" r="7.6" fill="#fff"/><circle cx="13.5" cy="13" r="12.2" fill="none" stroke="#3f9147" stroke-width="2.3"/><path d="M13.5 7.6 L18.6 9.3 L18.6 13.4 C18.6 16.4 16.6 18.2 13.5 19.4 C10.4 18.2 8.4 16.4 8.4 13.4 L8.4 9.3 Z" fill="#fff" stroke="#3f9147" stroke-width="1.4" stroke-linejoin="round"/><rect x="11.6" y="11.6" width="3.8" height="3.2" rx="0.6" fill="none" stroke="#3f9147" stroke-width="1.2"/></svg>
<svg style="left:468.9px;top:412.2px" width="24" height="23" viewBox="0 0 24 23" ><rect x="0" y="0" width="23.9" height="23" rx="1.8" fill="#3f9147"/><text x="12.1" y="14.7" font-family="Liberation Sans" font-size="10.6" font-weight="700" fill="#fff" text-anchor="middle" letter-spacing="0.1">VM</text></svg>
<svg style="left:518.1px;top:413.6px" width="27" height="20" viewBox="0 0 27 20" ><circle cx="17.7" cy="9.6" r="7.9" fill="none" stroke="#3f9147" stroke-width="1.3"/><ellipse cx="17.7" cy="9.6" rx="3.5" ry="7.9" fill="none" stroke="#3f9147" stroke-width="1.1"/><path d="M9.8 9.6 L25.6 9.6 M10.8 5.4 L24.6 5.4 M10.8 13.8 L24.6 13.8 M17.7 1.7 L17.7 17.5" stroke="#3f9147" stroke-width="1.1"/><rect x="0" y="4.1" width="15.6" height="15.7" rx="1" fill="#3f9147"/><text x="7.9" y="13.9" font-family="Liberation Sans" font-size="7.6" font-weight="700" fill="#fff" text-anchor="middle">VM</text></svg>
<svg style="left:572px;top:411.5px" width="19" height="24" viewBox="0 0 19 24" ><path d="M9 1.2 C11 2.6 14 3.4 16.9 3.6 L16.9 12.6 C16.9 17.6 13.6 20.6 9 22.2 C4.4 20.6 1.1 17.6 1.1 12.6 L1.1 3.6 C4 3.4 7 2.6 9 1.2 Z" fill="#fff" stroke="#3f9147" stroke-width="1.9" stroke-linejoin="round"/><path d="M3.6 7.6 C3.6 6.6 14.4 6.6 14.4 7.6 L10.2 12.6 L10.2 17.2 L8.6 17.6 L8.6 12.6 Z" fill="#3f9147"/><ellipse cx="9" cy="7.5" rx="5.2" ry="1.1" fill="#3f9147"/><ellipse cx="9" cy="7.3" rx="4.2" ry="0.6" fill="#fff" opacity="0.6"/><path d="M4.6 15.6 C5 14.4 5.6 13.8 6.2 13.6 M13.4 15.6 C13 14.4 12.4 13.8 11.8 13.6" fill="none" stroke="#3f9147" stroke-width="0.9"/></svg>
<svg style="left:617.9px;top:412.8px" width="26" height="22" viewBox="0 0 26 22" ><path d="M0 5.8 L6.6 4.6 L6.6 11 L0 11 Z M7.6 4.4 L16.6 2.8 L16.6 11 L7.6 11 Z M0 12 L6.6 12 L6.6 18.4 L0 17.2 Z M7.6 12 L16.6 12 L16.6 20.2 L7.6 18.6 Z" fill="#a63a30"/><path d="M13.6 10.2 C11.8 10.2 11 9 11 7.8 C11 6.6 11.8 5.6 13 5.4 C13.2 3 15 1 17.6 1 C19.8 1 21.4 2.4 21.8 4.4 C23.6 4.4 25 5.8 25 7.4 C25 9 23.8 10.2 22 10.2 Z" fill="#fff" stroke="#a63a30" stroke-width="1.1"/><text x="18" y="8.6" font-family="Liberation Sans" font-size="3.6" font-weight="700" fill="#a63a30" text-anchor="middle">VM</text></svg>
<svg style="left:668.1px;top:412.8px" width="28" height="23" viewBox="0 0 28 23" ><circle cx="9" cy="12.6" r="8.9" fill="#3f9147"/><path d="M9.2 8.6 C10.4 8 12.2 8.2 12.8 9.6 C11.6 10.3 11.4 12.6 13 13.4 C12.6 15 11.6 16.6 10.6 16.6 C9.8 16.6 9.6 16.2 9 16.2 C8.4 16.2 8 16.6 7.4 16.6 C6.2 16.6 5 14.2 5 12.4 C5 9.8 6.6 8.6 7.8 8.6 C8.4 8.6 8.8 8.8 9.2 8.6 Z M9.2 8.2 C9.2 7.2 9.8 6.4 10.8 6.2 C10.8 7.2 10.2 8 9.2 8.2 Z" fill="#fff"/><path d="M15.8 10.2 C14 10.2 13.2 9 13.2 7.8 C13.2 6.6 14 5.6 15.2 5.4 C15.4 3 17.2 1 19.8 1 C22 1 23.6 2.4 24 4.4 C25.8 4.4 27.2 5.8 27.2 7.4 C27.2 9 26 10.2 24.2 10.2 Z" fill="#fff" stroke="#3f9147" stroke-width="1.1"/><text x="20.2" y="8.6" font-family="Liberation Sans" font-size="3.6" font-weight="700" fill="#3f9147" text-anchor="middle">VM</text></svg>
<svg style="left:720px;top:412.2px" width="24" height="24" viewBox="0 0 24 24" ><path d="M11.2 1.4 C9 0.4 6.8 1.2 5.8 3 C3.6 3.2 2.4 5.2 2.8 7.2 C1 8.4 0.8 11.4 2.2 12.8 C1.4 15.2 2.6 17.6 4.8 18.2 C5.2 20.4 7.4 22 9.6 21.4 C10.2 22 10.8 22.4 11.2 22.4 Z" fill="none" stroke="#8a8a8a" stroke-width="1.4" stroke-linejoin="round"/><path d="M5.2 5.6 C6.6 6.4 7.4 7.8 6.8 9.4 M3.8 11.6 C5.6 12.2 7.2 11.6 8.2 10.6 M4.8 15.6 C6.2 15.6 7.8 16.6 8.2 18.2 M8.6 4 C9.4 5.6 9.2 7.2 8.6 8 M7.2 13.6 C8.6 13.6 9.8 14.6 10 16.2" fill="none" stroke="#8a8a8a" stroke-width="1"/><path d="M11.2 7 C13.6 7 13.4 3 15.2 3 M11.2 9.2 C15 9.2 15.6 5.7 20.3 5.7 M11.2 11.3 L21 11.3 M11.2 13.4 C15 13.4 15.6 17.9 20.3 17.9 M11.2 15.6 C13.6 15.6 13.4 20.3 15.2 20.3" fill="none" stroke="#8a8a8a" stroke-width="1.1"/><circle cx="15.4" cy="3" r="1.1" fill="#8a8a8a"/><circle cx="20.5" cy="5.7" r="1.1" fill="#8a8a8a"/><circle cx="21.2" cy="11.3" r="2.3" fill="#8a8a8a"/><circle cx="20.5" cy="17.9" r="1.1" fill="#8a8a8a"/><circle cx="15.4" cy="20.3" r="1.1" fill="#8a8a8a"/></svg>
<svg style="left:769.5px;top:411.5px" width="26" height="26" viewBox="0 0 26 26" ><path d="M14.58 2.72 A10 10 0 1 0 21.77 8.75" fill="none" stroke="#b03a2e" stroke-width="2.4"/><path d="M13 11.6 L14.69 0.3 A12.4 12.4 0 0 1 24 7.8 Z" fill="#b03a2e" stroke="#b03a2e" stroke-width="0.5" stroke-linejoin="round"/></svg>
<div class="t" style="left:131.3px;top:37.34px;font-size:12px;line-height:12px;font-weight:400;color:#eef4ea;letter-spacing:-0.580px">FortiSandbox</div>
<div class="t" style="left:128.4px;top:63.27px;font-size:11.5px;line-height:11.5px;font-weight:700;color:#3f7f43;letter-spacing:-0.536px">Favorite</div>
<div class="t" style="left:128.4px;top:85.27px;font-size:11.5px;line-height:11.5px;font-weight:400;color:#ffffff;letter-spacing:-0.522px">Status</div>
<div class="t" style="left:128.3px;top:107.87px;font-size:11.5px;line-height:11.5px;font-weight:400;color:#585858;letter-spacing:-0.375px">File On-Demand</div>
<div class="t" style="left:128.3px;top:130.27px;font-size:11.5px;line-height:11.5px;font-weight:400;color:#585858;letter-spacing:-0.572px">File Job Search</div>
<div class="t" style="left:128.3px;top:152.37px;font-size:11.5px;line-height:11.5px;font-weight:400;color:#585858;letter-spacing:-0.485px">URL On-Demand</div>
<div class="t" style="left:128.4px;top:174.57px;font-size:11.5px;line-height:11.5px;font-weight:400;color:#585858;letter-spacing:-0.446px">Dashboard</div>
<div class="t" style="left:128.4px;top:196.87px;font-size:11.5px;line-height:11.5px;font-weight:400;color:#585858;letter-spacing:-0.321px">Security Fabric</div>
<div class="t" style="left:128.4px;top:218.87px;font-size:11.5px;line-height:11.5px;font-weight:400;color:#585858;letter-spacing:-0.850px">Scan Job</div>
<div class="t" style="left:128.4px;top:241.07px;font-size:11.5px;line-height:11.5px;font-weight:400;color:#585858;letter-spacing:-0.472px">Scan Policy and Object</div>
<div class="t" style="left:128.4px;top:263.17px;font-size:11.5px;line-height:11.5px;font-weight:400;color:#585858;letter-spacing:-0.729px">System</div>
<div class="t" style="left:128.4px;top:285.37px;font-size:11.5px;line-height:11.5px;font-weight:400;color:#585858;letter-spacing:-0.488px">Log &amp; Report</div>
<div class="t" style="left:256.5px;top:541.84px;font-size:10px;line-height:10px;font-weight:400;color:#555;letter-spacing:-0.390px">v4.2.3</div>
<div class="t" style="left:305.3px;top:75.97px;font-size:13.5px;line-height:13.5px;font-weight:400;color:#777;letter-spacing:-0.411px">Scan Performance - Last 4 Hours</div>
<div class="t" style="left:359.0px;top:110.87px;font-size:13.5px;line-height:13.5px;font-weight:400;color:#333;letter-spacing:-0.549px">Scanned</div>
<div class="t" style="left:593.6px;top:110.67px;font-size:13.5px;line-height:13.5px;font-weight:400;color:#333;letter-spacing:0.070px">Performance</div>
<div class="t" style="left:827.7px;top:110.97px;font-size:13.5px;line-height:13.5px;font-weight:400;color:#333;letter-spacing:0.103px">Security</div>
<div class="t" style="left:359.0px;top:135.74px;font-size:12px;line-height:12px;font-weight:700;color:#489a55;letter-spacing:-0.058px">8,006</div>
<div class="t" style="left:359.0px;top:152.30px;font-size:8.5px;line-height:8.5px;font-weight:400;color:#333;letter-spacing:-0.073px">Total Scanned</div>
<div class="t" style="left:348.6px;top:176.37px;font-size:11.5px;line-height:11.5px;font-weight:400;color:#489a55;letter-spacing:-0.866px">59%</div>
<div class="t" style="left:348.9px;top:190.77px;font-size:7px;line-height:7px;font-weight:400;color:#333;letter-spacing:-0.758px">URL</div>
<div class="t" style="left:405.6px;top:176.37px;font-size:11.5px;line-height:11.5px;font-weight:400;color:#489a55;letter-spacing:-1.316px">18%</div>
<div class="t" style="left:405.9px;top:190.77px;font-size:7px;line-height:7px;font-weight:400;color:#333;letter-spacing:-0.500px">PDF</div>
<div class="t" style="left:462.0px;top:176.37px;font-size:11.5px;line-height:11.5px;font-weight:400;color:#489a55;letter-spacing:-2.125px">9%</div>
<div class="t" style="left:462.3px;top:190.77px;font-size:7px;line-height:7px;font-weight:400;color:#333;letter-spacing:-0.260px">User</div>
<div class="t" style="left:359.3px;top:236.54px;font-size:12px;line-height:12px;font-weight:700;color:#489a55;letter-spacing:-0.859px">91</div>
<div class="t" style="left:359.0px;top:253.50px;font-size:8.5px;line-height:8.5px;font-weight:400;color:#333;letter-spacing:0.027px">Total VMScanned</div>
<div class="t" style="left:348.6px;top:276.97px;font-size:11.5px;line-height:11.5px;font-weight:400;color:#489a55;letter-spacing:-0.866px">44%</div>
<div class="t" style="left:348.6px;top:291.27px;font-size:7px;line-height:7px;font-weight:400;color:#333;letter-spacing:0.089px">Office</div>
<div class="t" style="left:405.3px;top:276.97px;font-size:11.5px;line-height:11.5px;font-weight:400;color:#489a55;letter-spacing:-1.066px">41%</div>
<div class="t" style="left:405.3px;top:291.27px;font-size:7px;line-height:7px;font-weight:400;color:#333;letter-spacing:-0.254px">Executables</div>
<div class="t" style="left:477.3px;top:276.97px;font-size:11.5px;line-height:11.5px;font-weight:400;color:#489a55;letter-spacing:-1.316px">15%</div>
<div class="t" style="left:477.3px;top:291.27px;font-size:7px;line-height:7px;font-weight:400;color:#333;letter-spacing:-0.750px">PDF</div>
<div class="t" style="left:593.6px;top:136.69px;font-size:11px;line-height:11px;font-weight:700;color:#3d80c6;letter-spacing:0.050px">26s / 5.0s / 5m</div>
<div class="t" style="left:593.6px;top:152.60px;font-size:8.5px;line-height:8.5px;font-weight:400;color:#333;letter-spacing:0.326px">Avg/Median/Max</div>
<div class="t" style="left:593.6px;top:165.80px;font-size:8.5px;line-height:8.5px;font-weight:400;color:#333;letter-spacing:0.054px">Processing Wait Time</div>
<div class="t" style="left:593.6px;top:187.39px;font-size:11px;line-height:11px;font-weight:700;color:#3d80c6;letter-spacing:0.322px">2,001.5 / 1,955.0 / 2,278</div>
<div class="t" style="left:593.6px;top:203.30px;font-size:8.5px;line-height:8.5px;font-weight:400;color:#333;letter-spacing:0.326px">Avg/Median/Max</div>
<div class="t" style="left:593.6px;top:216.50px;font-size:8.5px;line-height:8.5px;font-weight:400;color:#333;letter-spacing:-0.018px">Job Processed per Hour</div>
<div class="t" style="left:593.6px;top:237.29px;font-size:11px;line-height:11px;font-weight:700;color:#3d80c6;letter-spacing:0.089px">11s / 2.0s / 53s</div>
<div class="t" style="left:593.6px;top:253.20px;font-size:8.5px;line-height:8.5px;font-weight:400;color:#333;letter-spacing:0.326px">Avg/Median/Max</div>
<div class="t" style="left:593.6px;top:266.40px;font-size:8.5px;line-height:8.5px;font-weight:400;color:#333;letter-spacing:0.238px">VM Wait Time</div>
<div class="t" style="left:593.6px;top:287.89px;font-size:11px;line-height:11px;font-weight:700;color:#3d80c6;letter-spacing:0.064px">28s / 8.0s / 5m</div>
<div class="t" style="left:593.6px;top:303.80px;font-size:8.5px;line-height:8.5px;font-weight:400;color:#333;letter-spacing:0.326px">Avg/Median/Max</div>
<div class="t" style="left:593.6px;top:317.00px;font-size:8.5px;line-height:8.5px;font-weight:400;color:#333;letter-spacing:0.017px">Total Processing Time</div>
<div class="t" style="left:584.5px;top:344.76px;font-size:9.5px;line-height:9.5px;font-weight:400;color:#777;letter-spacing:-0.097px">Completed jobs as of Feb-17 09:00</div>
<div class="t" style="left:828.0px;top:136.89px;font-size:11px;line-height:11px;font-weight:700;color:#3d9bd0;letter-spacing:0.000px">0</div>
<div class="t" style="left:828.0px;top:152.90px;font-size:8.5px;line-height:8.5px;font-weight:400;color:#333;letter-spacing:0.208px">AI Detected</div>
<div class="t" style="left:828.0px;top:186.89px;font-size:11px;line-height:11px;font-weight:700;color:#c23a3a;letter-spacing:0.570px">121</div>
<div class="t" style="left:828.0px;top:202.90px;font-size:8.5px;line-height:8.5px;font-weight:400;color:#333;letter-spacing:0.154px">0-day Malware</div>
<div class="t" style="left:828.0px;top:236.79px;font-size:11px;line-height:11px;font-weight:700;color:#e67a2e;letter-spacing:0.000px">0</div>
<div class="t" style="left:828.0px;top:252.80px;font-size:8.5px;line-height:8.5px;font-weight:400;color:#333;letter-spacing:0.210px">Known Malware</div>
<div class="t" style="left:828.0px;top:287.39px;font-size:11px;line-height:11px;font-weight:700;color:#e67a2e;letter-spacing:0.820px">120</div>
<div class="t" style="left:828.0px;top:303.40px;font-size:8.5px;line-height:8.5px;font-weight:400;color:#333;letter-spacing:-0.160px">Suspicious URL</div>
<div class="t" style="left:305.0px;top:379.77px;font-size:13.5px;line-height:13.5px;font-weight:400;color:#777;letter-spacing:-0.222px">Connectivity and Services</div>
</body></html>
